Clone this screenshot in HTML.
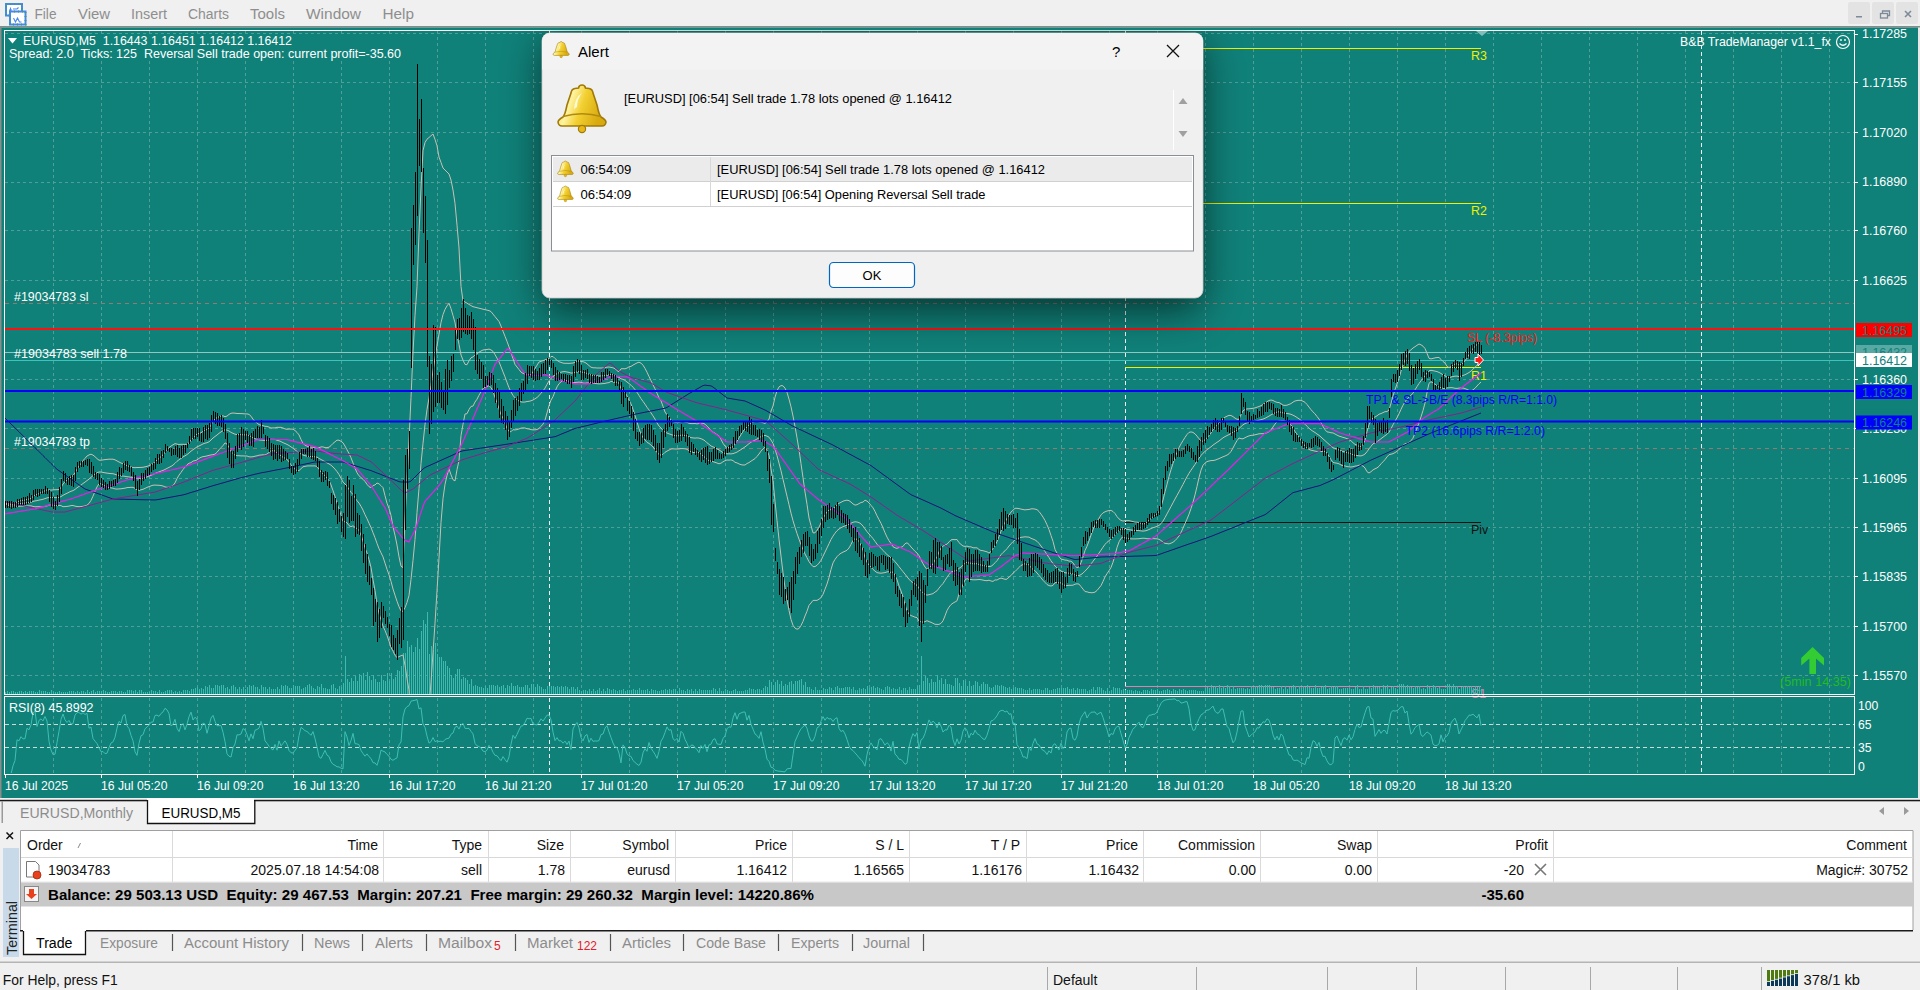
<!DOCTYPE html><html><head><meta charset="utf-8"><style>html,body{margin:0;padding:0;background:#f0f0f0;overflow:hidden}svg{display:block} text{font-family:"Liberation Sans",sans-serif;white-space:pre}</style></head><body><svg width="1920" height="990" viewBox="0 0 1920 990"><rect x="0" y="0" width="1920" height="26" fill="#f0f0f0" /><rect x="0" y="26" width="1920" height="1.5" fill="#8a8a8a" /><g transform="translate(5,3)"><rect x="1" y="1" width="16" height="11.5" fill="#fff" stroke="#4a86f0" stroke-width="2"/><rect x="1" y="1" width="16" height="11.5" fill="none" stroke="#3aa070" stroke-width="2" stroke-dasharray="1,3"/><rect x="5" y="8.5" width="15.5" height="13" fill="#fff" stroke="#4a86f0" stroke-width="2"/><rect x="5" y="8.5" width="15.5" height="13" fill="none" stroke="#3aa070" stroke-width="2" stroke-dasharray="1,3"/><path d="M4 7 h3 M5.5 4.5 v5 M8 6 h4 l1.5 -1.5 M8.5 15 l2 4 l2 -4 l2 4 h2" fill="none" stroke="#4a86f0" stroke-width="1.1"/></g><text x="34.5" y="19" font-size="14" fill="#8e8e8e" font-weight="normal" text-anchor="start" textLength="22.0" lengthAdjust="spacingAndGlyphs" >File</text><text x="78" y="19" font-size="14" fill="#8e8e8e" font-weight="normal" text-anchor="start" textLength="32" lengthAdjust="spacingAndGlyphs" >View</text><text x="131" y="19" font-size="14" fill="#8e8e8e" font-weight="normal" text-anchor="start" textLength="36" lengthAdjust="spacingAndGlyphs" >Insert</text><text x="188" y="19" font-size="14" fill="#8e8e8e" font-weight="normal" text-anchor="start" textLength="41" lengthAdjust="spacingAndGlyphs" >Charts</text><text x="250" y="19" font-size="14" fill="#8e8e8e" font-weight="normal" text-anchor="start" textLength="35" lengthAdjust="spacingAndGlyphs" >Tools</text><text x="306" y="19" font-size="14" fill="#8e8e8e" font-weight="normal" text-anchor="start" textLength="55" lengthAdjust="spacingAndGlyphs" >Window</text><text x="382.5" y="19" font-size="14" fill="#8e8e8e" font-weight="normal" text-anchor="start" textLength="31.5" lengthAdjust="spacingAndGlyphs" >Help</text><rect x="1848" y="2" width="22" height="22" fill="#e3e3e3" rx="2"/><rect x="1872" y="2" width="22" height="22" fill="#e3e3e3" rx="2"/><rect x="1896" y="2" width="22" height="22" fill="#e3e3e3" rx="2"/><rect x="1856" y="16" width="6" height="1.5" fill="#7d8a99"/><g fill="none" stroke="#7d8a99" stroke-width="1.3"><rect x="1880.5" y="13.5" width="7" height="4.5"/><path d="M1882.5 13.5 v-2.5 h7 v4.5 h-2"/></g><path d="M1905 11 l6 6 M1911 11 l-6 6" stroke="#7d8a99" stroke-width="1.6"/><rect x="0" y="27.5" width="1920" height="771" fill="#108179" /><rect x="0" y="27.5" width="1.5" height="771" fill="#8c8c8c" /><rect x="1918" y="27.5" width="2" height="771" fill="#e8e8e8" /><line x1="5" y1="33.5" x2="1854" y2="33.5" stroke="#4f9e97" stroke-dasharray="3,3"/><line x1="5" y1="82.5" x2="1854" y2="82.5" stroke="#4f9e97" stroke-dasharray="3,3"/><line x1="5" y1="132.5" x2="1854" y2="132.5" stroke="#4f9e97" stroke-dasharray="3,3"/><line x1="5" y1="182.5" x2="1854" y2="182.5" stroke="#4f9e97" stroke-dasharray="3,3"/><line x1="5" y1="230.5" x2="1854" y2="230.5" stroke="#4f9e97" stroke-dasharray="3,3"/><line x1="5" y1="280.5" x2="1854" y2="280.5" stroke="#4f9e97" stroke-dasharray="3,3"/><line x1="5" y1="329.5" x2="1854" y2="329.5" stroke="#4f9e97" stroke-dasharray="3,3"/><line x1="5" y1="379.5" x2="1854" y2="379.5" stroke="#4f9e97" stroke-dasharray="3,3"/><line x1="5" y1="428.5" x2="1854" y2="428.5" stroke="#4f9e97" stroke-dasharray="3,3"/><line x1="5" y1="478.5" x2="1854" y2="478.5" stroke="#4f9e97" stroke-dasharray="3,3"/><line x1="5" y1="527.5" x2="1854" y2="527.5" stroke="#4f9e97" stroke-dasharray="3,3"/><line x1="5" y1="576.5" x2="1854" y2="576.5" stroke="#4f9e97" stroke-dasharray="3,3"/><line x1="5" y1="626.5" x2="1854" y2="626.5" stroke="#4f9e97" stroke-dasharray="3,3"/><line x1="5" y1="675.5" x2="1854" y2="675.5" stroke="#4f9e97" stroke-dasharray="3,3"/><line x1="53.5" y1="31" x2="53.5" y2="694" stroke="#4f9e97" stroke-dasharray="3,3"/><line x1="53.5" y1="698" x2="53.5" y2="773" stroke="#4f9e97" stroke-dasharray="3,3"/><line x1="101.5" y1="31" x2="101.5" y2="694" stroke="#4f9e97" stroke-dasharray="3,3"/><line x1="101.5" y1="698" x2="101.5" y2="773" stroke="#4f9e97" stroke-dasharray="3,3"/><line x1="149.5" y1="31" x2="149.5" y2="694" stroke="#4f9e97" stroke-dasharray="3,3"/><line x1="149.5" y1="698" x2="149.5" y2="773" stroke="#4f9e97" stroke-dasharray="3,3"/><line x1="197.5" y1="31" x2="197.5" y2="694" stroke="#4f9e97" stroke-dasharray="3,3"/><line x1="197.5" y1="698" x2="197.5" y2="773" stroke="#4f9e97" stroke-dasharray="3,3"/><line x1="245.5" y1="31" x2="245.5" y2="694" stroke="#4f9e97" stroke-dasharray="3,3"/><line x1="245.5" y1="698" x2="245.5" y2="773" stroke="#4f9e97" stroke-dasharray="3,3"/><line x1="293.5" y1="31" x2="293.5" y2="694" stroke="#4f9e97" stroke-dasharray="3,3"/><line x1="293.5" y1="698" x2="293.5" y2="773" stroke="#4f9e97" stroke-dasharray="3,3"/><line x1="341.5" y1="31" x2="341.5" y2="694" stroke="#4f9e97" stroke-dasharray="3,3"/><line x1="341.5" y1="698" x2="341.5" y2="773" stroke="#4f9e97" stroke-dasharray="3,3"/><line x1="389.5" y1="31" x2="389.5" y2="694" stroke="#4f9e97" stroke-dasharray="3,3"/><line x1="389.5" y1="698" x2="389.5" y2="773" stroke="#4f9e97" stroke-dasharray="3,3"/><line x1="437.5" y1="31" x2="437.5" y2="694" stroke="#4f9e97" stroke-dasharray="3,3"/><line x1="437.5" y1="698" x2="437.5" y2="773" stroke="#4f9e97" stroke-dasharray="3,3"/><line x1="485.5" y1="31" x2="485.5" y2="694" stroke="#4f9e97" stroke-dasharray="3,3"/><line x1="485.5" y1="698" x2="485.5" y2="773" stroke="#4f9e97" stroke-dasharray="3,3"/><line x1="533.5" y1="31" x2="533.5" y2="694" stroke="#4f9e97" stroke-dasharray="3,3"/><line x1="533.5" y1="698" x2="533.5" y2="773" stroke="#4f9e97" stroke-dasharray="3,3"/><line x1="581.5" y1="31" x2="581.5" y2="694" stroke="#4f9e97" stroke-dasharray="3,3"/><line x1="581.5" y1="698" x2="581.5" y2="773" stroke="#4f9e97" stroke-dasharray="3,3"/><line x1="629.5" y1="31" x2="629.5" y2="694" stroke="#4f9e97" stroke-dasharray="3,3"/><line x1="629.5" y1="698" x2="629.5" y2="773" stroke="#4f9e97" stroke-dasharray="3,3"/><line x1="677.5" y1="31" x2="677.5" y2="694" stroke="#4f9e97" stroke-dasharray="3,3"/><line x1="677.5" y1="698" x2="677.5" y2="773" stroke="#4f9e97" stroke-dasharray="3,3"/><line x1="725.5" y1="31" x2="725.5" y2="694" stroke="#4f9e97" stroke-dasharray="3,3"/><line x1="725.5" y1="698" x2="725.5" y2="773" stroke="#4f9e97" stroke-dasharray="3,3"/><line x1="773.5" y1="31" x2="773.5" y2="694" stroke="#4f9e97" stroke-dasharray="3,3"/><line x1="773.5" y1="698" x2="773.5" y2="773" stroke="#4f9e97" stroke-dasharray="3,3"/><line x1="821.5" y1="31" x2="821.5" y2="694" stroke="#4f9e97" stroke-dasharray="3,3"/><line x1="821.5" y1="698" x2="821.5" y2="773" stroke="#4f9e97" stroke-dasharray="3,3"/><line x1="869.5" y1="31" x2="869.5" y2="694" stroke="#4f9e97" stroke-dasharray="3,3"/><line x1="869.5" y1="698" x2="869.5" y2="773" stroke="#4f9e97" stroke-dasharray="3,3"/><line x1="917.5" y1="31" x2="917.5" y2="694" stroke="#4f9e97" stroke-dasharray="3,3"/><line x1="917.5" y1="698" x2="917.5" y2="773" stroke="#4f9e97" stroke-dasharray="3,3"/><line x1="965.5" y1="31" x2="965.5" y2="694" stroke="#4f9e97" stroke-dasharray="3,3"/><line x1="965.5" y1="698" x2="965.5" y2="773" stroke="#4f9e97" stroke-dasharray="3,3"/><line x1="1013.5" y1="31" x2="1013.5" y2="694" stroke="#4f9e97" stroke-dasharray="3,3"/><line x1="1013.5" y1="698" x2="1013.5" y2="773" stroke="#4f9e97" stroke-dasharray="3,3"/><line x1="1061.5" y1="31" x2="1061.5" y2="694" stroke="#4f9e97" stroke-dasharray="3,3"/><line x1="1061.5" y1="698" x2="1061.5" y2="773" stroke="#4f9e97" stroke-dasharray="3,3"/><line x1="1109.5" y1="31" x2="1109.5" y2="694" stroke="#4f9e97" stroke-dasharray="3,3"/><line x1="1109.5" y1="698" x2="1109.5" y2="773" stroke="#4f9e97" stroke-dasharray="3,3"/><line x1="1157.5" y1="31" x2="1157.5" y2="694" stroke="#4f9e97" stroke-dasharray="3,3"/><line x1="1157.5" y1="698" x2="1157.5" y2="773" stroke="#4f9e97" stroke-dasharray="3,3"/><line x1="1205.5" y1="31" x2="1205.5" y2="694" stroke="#4f9e97" stroke-dasharray="3,3"/><line x1="1205.5" y1="698" x2="1205.5" y2="773" stroke="#4f9e97" stroke-dasharray="3,3"/><line x1="1253.5" y1="31" x2="1253.5" y2="694" stroke="#4f9e97" stroke-dasharray="3,3"/><line x1="1253.5" y1="698" x2="1253.5" y2="773" stroke="#4f9e97" stroke-dasharray="3,3"/><line x1="1301.5" y1="31" x2="1301.5" y2="694" stroke="#4f9e97" stroke-dasharray="3,3"/><line x1="1301.5" y1="698" x2="1301.5" y2="773" stroke="#4f9e97" stroke-dasharray="3,3"/><line x1="1349.5" y1="31" x2="1349.5" y2="694" stroke="#4f9e97" stroke-dasharray="3,3"/><line x1="1349.5" y1="698" x2="1349.5" y2="773" stroke="#4f9e97" stroke-dasharray="3,3"/><line x1="1397.5" y1="31" x2="1397.5" y2="694" stroke="#4f9e97" stroke-dasharray="3,3"/><line x1="1397.5" y1="698" x2="1397.5" y2="773" stroke="#4f9e97" stroke-dasharray="3,3"/><line x1="1445.5" y1="31" x2="1445.5" y2="694" stroke="#4f9e97" stroke-dasharray="3,3"/><line x1="1445.5" y1="698" x2="1445.5" y2="773" stroke="#4f9e97" stroke-dasharray="3,3"/><line x1="1493.5" y1="31" x2="1493.5" y2="694" stroke="#4f9e97" stroke-dasharray="3,3"/><line x1="1493.5" y1="698" x2="1493.5" y2="773" stroke="#4f9e97" stroke-dasharray="3,3"/><line x1="1541.5" y1="31" x2="1541.5" y2="694" stroke="#4f9e97" stroke-dasharray="3,3"/><line x1="1541.5" y1="698" x2="1541.5" y2="773" stroke="#4f9e97" stroke-dasharray="3,3"/><line x1="1589.5" y1="31" x2="1589.5" y2="694" stroke="#4f9e97" stroke-dasharray="3,3"/><line x1="1589.5" y1="698" x2="1589.5" y2="773" stroke="#4f9e97" stroke-dasharray="3,3"/><line x1="1637.5" y1="31" x2="1637.5" y2="694" stroke="#4f9e97" stroke-dasharray="3,3"/><line x1="1637.5" y1="698" x2="1637.5" y2="773" stroke="#4f9e97" stroke-dasharray="3,3"/><line x1="1685.5" y1="31" x2="1685.5" y2="694" stroke="#4f9e97" stroke-dasharray="3,3"/><line x1="1685.5" y1="698" x2="1685.5" y2="773" stroke="#4f9e97" stroke-dasharray="3,3"/><line x1="1733.5" y1="31" x2="1733.5" y2="694" stroke="#4f9e97" stroke-dasharray="3,3"/><line x1="1733.5" y1="698" x2="1733.5" y2="773" stroke="#4f9e97" stroke-dasharray="3,3"/><line x1="1781.5" y1="31" x2="1781.5" y2="694" stroke="#4f9e97" stroke-dasharray="3,3"/><line x1="1781.5" y1="698" x2="1781.5" y2="773" stroke="#4f9e97" stroke-dasharray="3,3"/><line x1="1829.5" y1="31" x2="1829.5" y2="694" stroke="#4f9e97" stroke-dasharray="3,3"/><line x1="1829.5" y1="698" x2="1829.5" y2="773" stroke="#4f9e97" stroke-dasharray="3,3"/><line x1="549.5" y1="31" x2="549.5" y2="694" stroke="#f0f0f0" stroke-dasharray="4,3"/><line x1="549.5" y1="698" x2="549.5" y2="773" stroke="#f0f0f0" stroke-dasharray="4,3"/><line x1="1125.5" y1="31" x2="1125.5" y2="694" stroke="#f0f0f0" stroke-dasharray="4,3"/><line x1="1125.5" y1="698" x2="1125.5" y2="773" stroke="#f0f0f0" stroke-dasharray="4,3"/><line x1="1701.5" y1="31" x2="1701.5" y2="694" stroke="#f0f0f0" stroke-dasharray="4,3"/><line x1="1701.5" y1="698" x2="1701.5" y2="773" stroke="#f0f0f0" stroke-dasharray="4,3"/><line x1="5" y1="724.5" x2="1854" y2="724.5" stroke="#c8dcd8" stroke-dasharray="4,3"/><line x1="5" y1="747.5" x2="1854" y2="747.5" stroke="#c8dcd8" stroke-dasharray="4,3"/><line x1="5" y1="303.5" x2="1854" y2="303.5" stroke="#95796f" stroke-dasharray="4,4"/><line x1="5" y1="448.5" x2="1854" y2="448.5" stroke="#95796f" stroke-dasharray="4,4"/><line x1="5" y1="352.5" x2="1854" y2="352.5" stroke="#8ec8c4" stroke-width="1"/><line x1="5" y1="360.5" x2="1854" y2="360.5" stroke="#3cc4bc" stroke-width="1"/><line x1="1125" y1="48.5" x2="1481" y2="48.5" stroke="#f0f000"/><line x1="1125" y1="203.5" x2="1481" y2="203.5" stroke="#f0f000"/><line x1="1125" y1="367.5" x2="1481" y2="367.5" stroke="#f0f000"/><line x1="1125" y1="522.5" x2="1481" y2="522.5" stroke="#111"/><line x1="1125" y1="686.5" x2="1481" y2="686.5" stroke="#e080b0"/><text x="1471" y="60" font-size="12.4" fill="#f0f000">R3</text><text x="1471" y="215" font-size="12.4" fill="#f0f000">R2</text><text x="1471" y="380" font-size="12.4" fill="#f0f000">R1</text><text x="1471" y="534" font-size="12.4" fill="#111">Piv</text><text x="1471" y="697.5" font-size="12.4" fill="#e080b0">S1</text><text x="14" y="301" font-size="12.4" fill="#fff">#19034783 sl</text><text x="14" y="358" font-size="12.4" fill="#fff" textLength="113" lengthAdjust="spacingAndGlyphs">#19034783 sell 1.78</text><text x="14" y="446" font-size="12.4" fill="#fff">#19034783 tp</text><defs><clipPath id="cm"><rect x="5" y="31" width="1849" height="663"/></clipPath><clipPath id="cr"><rect x="5" y="697" width="1849" height="76"/></clipPath></defs><g clip-path="url(#cm)"><path d="M5.5 694V691.7 M7.5 694V690.6 M9.5 694V691.8 M11.5 694V690.8 M13.5 694V691.4 M15.5 694V692.1 M17.5 694V692.3 M19.5 694V691.2 M21.5 694V690.7 M23.5 694V692.2 M25.5 694V691.0 M27.5 694V691.8 M29.5 694V691.0 M31.5 694V690.7 M33.5 694V690.9 M35.5 694V691.8 M37.5 694V692.0 M39.5 694V690.4 M41.5 694V690.5 M43.5 694V690.5 M45.5 694V691.2 M47.5 694V692.1 M49.5 694V691.5 M51.5 694V690.4 M53.5 694V692.1 M55.5 694V691.6 M57.5 694V692.1 M59.5 694V690.5 M61.5 694V691.5 M63.5 694V692.0 M65.5 694V691.5 M67.5 694V691.8 M69.5 694V691.3 M71.5 694V690.9 M73.5 694V690.8 M75.5 694V691.9 M77.5 694V691.0 M79.5 694V692.0 M81.5 694V691.2 M83.5 694V690.5 M85.5 694V691.6 M87.5 694V690.4 M89.5 694V691.6 M91.5 694V691.3 M93.5 694V690.4 M95.5 694V692.1 M97.5 694V690.9 M99.5 694V690.9 M101.5 694V690.6 M103.5 694V690.1 M105.5 694V690.6 M107.5 694V691.6 M109.5 694V691.6 M111.5 694V691.0 M113.5 694V691.4 M115.5 694V690.8 M117.5 694V691.8 M119.5 694V690.5 M121.5 694V691.1 M123.5 694V691.9 M125.5 694V691.7 M127.5 694V689.9 M129.5 694V690.1 M131.5 694V690.0 M133.5 694V691.1 M135.5 694V689.8 M137.5 694V691.6 M139.5 694V690.3 M141.5 694V689.8 M143.5 694V691.5 M145.5 694V691.9 M147.5 694V691.6 M149.5 694V691.7 M151.5 694V690.1 M153.5 694V690.5 M155.5 694V690.8 M157.5 694V691.6 M159.5 694V690.4 M161.5 694V691.6 M163.5 694V691.6 M165.5 694V690.5 M167.5 694V690.4 M169.5 694V690.0 M171.5 694V689.9 M173.5 694V691.5 M175.5 694V691.1 M177.5 694V691.5 M179.5 694V690.7 M181.5 694V691.8 M183.5 694V689.8 M185.5 694V690.2 M187.5 694V689.9 M189.5 694V690.6 M191.5 694V689.2 M193.5 694V688.5 M195.5 694V687.7 M197.5 694V687.0 M199.5 694V688.8 M201.5 694V687.9 M203.5 694V689.3 M205.5 694V685.9 M207.5 694V687.3 M209.5 694V684.8 M211.5 694V688.2 M213.5 694V687.5 M215.5 694V685.3 M217.5 694V684.8 M219.5 694V685.8 M221.5 694V685.2 M223.5 694V685.0 M225.5 694V688.2 M227.5 694V686.5 M229.5 694V689.2 M231.5 694V686.1 M233.5 694V684.8 M235.5 694V687.0 M237.5 694V688.7 M239.5 694V686.6 M241.5 694V689.1 M243.5 694V687.1 M245.5 694V689.0 M247.5 694V687.3 M249.5 694V685.3 M251.5 694V685.7 M253.5 694V685.1 M255.5 694V687.1 M257.5 694V687.2 M259.5 694V689.1 M261.5 694V685.4 M263.5 694V686.5 M265.5 694V687.3 M267.5 694V688.6 M269.5 694V687.0 M271.5 694V689.0 M273.5 694V688.7 M275.5 694V688.9 M277.5 694V687.1 M279.5 694V688.6 M281.5 694V685.0 M283.5 694V686.1 M285.5 694V684.8 M287.5 694V686.4 M289.5 694V688.4 M291.5 694V687.8 M293.5 694V684.9 M295.5 694V686.2 M297.5 694V685.8 M299.5 694V685.9 M301.5 694V689.0 M303.5 694V688.1 M305.5 694V686.9 M307.5 694V684.7 M309.5 694V684.2 M311.5 694V686.0 M313.5 694V687.8 M315.5 694V688.9 M317.5 694V686.2 M319.5 694V687.0 M321.5 694V684.2 M323.5 694V688.0 M325.5 694V688.0 M327.5 694V689.0 M329.5 694V688.9 M331.5 694V684.8 M333.5 694V684.4 M335.5 694V688.2 M337.5 694V689.0 M339.5 694V685.9 M341.5 694V687.1 M343.5 694V683.3 M345.5 694V656.0 M347.5 694V678.7 M349.5 694V681.7 M351.5 694V677.5 M353.5 694V680.8 M355.5 694V675.5 M357.5 694V680.9 M359.5 694V673.9 M361.5 694V675.9 M363.5 694V673.3 M365.5 694V679.5 M367.5 694V672.3 M369.5 694V676.4 M371.5 694V680.1 M373.5 694V675.4 M375.5 694V679.3 M377.5 694V681.5 M379.5 694V682.3 M381.5 694V675.2 M383.5 694V679.7 M385.5 694V681.3 M387.5 694V672.7 M389.5 694V680.6 M391.5 694V672.7 M393.5 694V678.7 M395.5 694V677.4 M397.5 694V669.9 M399.5 694V671.0 M401.5 694V666.0 M403.5 694V653.3 M405.5 694V653.0 M407.5 694V640.7 M409.5 694V646.9 M411.5 694V645.4 M413.5 694V651.6 M415.5 694V647.3 M417.5 694V638.4 M419.5 694V648.9 M421.5 694V631.4 M423.5 694V620.0 M425.5 694V623.7 M427.5 694V612.0 M429.5 694V653.9 M431.5 694V645.9 M433.5 694V650.1 M435.5 694V642.6 M437.5 694V653.7 M439.5 694V656.9 M441.5 694V657.1 M443.5 694V660.8 M445.5 694V660.6 M447.5 694V665.6 M449.5 694V668.1 M451.5 694V675.1 M453.5 694V677.7 M455.5 694V673.9 M457.5 694V668.6 M459.5 694V669.2 M461.5 694V678.9 M463.5 694V676.5 M465.5 694V678.3 M467.5 694V680.1 M469.5 694V683.7 M471.5 694V679.2 M473.5 694V685.9 M475.5 694V685.4 M477.5 694V685.8 M479.5 694V686.9 M481.5 694V687.4 M483.5 694V688.1 M485.5 694V685.5 M487.5 694V687.6 M489.5 694V684.8 M491.5 694V685.1 M493.5 694V685.0 M495.5 694V685.9 M497.5 694V685.2 M499.5 694V687.0 M501.5 694V686.1 M503.5 694V684.9 M505.5 694V687.6 M507.5 694V684.7 M509.5 694V685.6 M511.5 694V683.4 M513.5 694V685.5 M515.5 694V685.9 M517.5 694V684.7 M519.5 694V687.4 M521.5 694V687.0 M523.5 694V686.7 M525.5 694V685.1 M527.5 694V685.2 M529.5 694V688.1 M531.5 694V684.0 M533.5 694V683.9 M535.5 694V686.6 M537.5 694V684.0 M539.5 694V686.0 M541.5 694V687.3 M543.5 694V688.8 M545.5 694V689.2 M547.5 694V686.3 M549.5 694V685.7 M551.5 694V686.3 M553.5 694V685.5 M555.5 694V687.2 M557.5 694V685.8 M559.5 694V686.5 M561.5 694V686.4 M563.5 694V686.8 M565.5 694V686.3 M567.5 694V686.9 M569.5 694V689.2 M571.5 694V686.6 M573.5 694V687.1 M575.5 694V688.8 M577.5 694V687.3 M579.5 694V689.6 M581.5 694V690.8 M583.5 694V689.7 M585.5 694V690.2 M587.5 694V690.8 M589.5 694V688.6 M591.5 694V690.7 M593.5 694V689.1 M595.5 694V690.7 M597.5 694V689.7 M599.5 694V688.3 M601.5 694V691.0 M603.5 694V688.7 M605.5 694V691.2 M607.5 694V688.3 M609.5 694V688.5 M611.5 694V689.9 M613.5 694V689.3 M615.5 694V689.9 M617.5 694V690.8 M619.5 694V690.2 M621.5 694V689.9 M623.5 694V688.6 M625.5 694V690.9 M627.5 694V689.6 M629.5 694V689.8 M631.5 694V689.6 M633.5 694V688.9 M635.5 694V689.5 M637.5 694V690.3 M639.5 694V688.4 M641.5 694V689.5 M643.5 694V690.4 M645.5 694V689.6 M647.5 694V688.6 M649.5 694V691.1 M651.5 694V689.3 M653.5 694V689.8 M655.5 694V690.4 M657.5 694V690.8 M659.5 694V690.6 M661.5 694V689.9 M663.5 694V690.0 M665.5 694V689.4 M667.5 694V690.4 M669.5 694V689.4 M671.5 694V689.8 M673.5 694V688.9 M675.5 694V688.8 M677.5 694V690.5 M679.5 694V688.3 M681.5 694V689.6 M683.5 694V690.2 M685.5 694V690.5 M687.5 694V689.1 M689.5 694V689.9 M691.5 694V689.2 M693.5 694V690.5 M695.5 694V688.7 M697.5 694V690.5 M699.5 694V688.6 M701.5 694V689.9 M703.5 694V690.0 M705.5 694V689.5 M707.5 694V689.7 M709.5 694V689.6 M711.5 694V689.6 M713.5 694V688.4 M715.5 694V689.0 M717.5 694V691.0 M719.5 694V688.3 M721.5 694V691.2 M723.5 694V691.1 M725.5 694V688.8 M727.5 694V690.4 M729.5 694V691.2 M731.5 694V690.7 M733.5 694V689.8 M735.5 694V688.7 M737.5 694V691.2 M739.5 694V690.8 M741.5 694V691.2 M743.5 694V691.1 M745.5 694V690.3 M747.5 694V689.8 M749.5 694V688.3 M751.5 694V689.3 M753.5 694V688.7 M755.5 694V689.5 M757.5 694V688.5 M759.5 694V689.2 M761.5 694V689.9 M763.5 694V688.0 M765.5 694V686.0 M767.5 694V687.0 M769.5 694V679.5 M771.5 694V682.2 M773.5 694V684.6 M775.5 694V682.2 M777.5 694V679.5 M779.5 694V684.0 M781.5 694V681.4 M783.5 694V685.5 M785.5 694V684.3 M787.5 694V684.7 M789.5 694V682.1 M791.5 694V680.5 M793.5 694V684.4 M795.5 694V680.5 M797.5 694V681.4 M799.5 694V680.0 M801.5 694V678.7 M803.5 694V685.1 M805.5 694V681.9 M807.5 694V686.5 M809.5 694V687.4 M811.5 694V689.4 M813.5 694V689.8 M815.5 694V687.4 M817.5 694V689.7 M819.5 694V690.0 M821.5 694V689.8 M823.5 694V687.9 M825.5 694V689.3 M827.5 694V689.0 M829.5 694V686.9 M831.5 694V688.3 M833.5 694V689.5 M835.5 694V687.3 M837.5 694V686.0 M839.5 694V687.5 M841.5 694V688.3 M843.5 694V687.9 M845.5 694V687.2 M847.5 694V686.6 M849.5 694V686.9 M851.5 694V689.1 M853.5 694V686.9 M855.5 694V689.7 M857.5 694V689.6 M859.5 694V688.0 M861.5 694V689.4 M863.5 694V687.8 M865.5 694V689.0 M867.5 694V686.2 M869.5 694V688.3 M871.5 694V686.7 M873.5 694V686.2 M875.5 694V688.2 M877.5 694V686.9 M879.5 694V688.1 M881.5 694V688.5 M883.5 694V689.6 M885.5 694V687.4 M887.5 694V686.3 M889.5 694V687.3 M891.5 694V688.8 M893.5 694V687.9 M895.5 694V688.7 M897.5 694V688.5 M899.5 694V686.9 M901.5 694V690.1 M903.5 694V688.1 M905.5 694V688.0 M907.5 694V689.5 M909.5 694V687.1 M911.5 694V689.1 M913.5 694V688.5 M915.5 694V689.1 M917.5 694V685.6 M919.5 694V684.8 M921.5 694V656.0 M923.5 694V681.3 M925.5 694V675.6 M927.5 694V678.3 M929.5 694V683.2 M931.5 694V679.4 M933.5 694V682.0 M935.5 694V681.7 M937.5 694V675.4 M939.5 694V680.3 M941.5 694V677.9 M943.5 694V683.7 M945.5 694V679.4 M947.5 694V684.4 M949.5 694V683.6 M951.5 694V684.6 M953.5 694V685.6 M955.5 694V678.1 M957.5 694V677.8 M959.5 694V683.1 M961.5 694V686.2 M963.5 694V680.4 M965.5 694V681.2 M967.5 694V686.3 M969.5 694V680.8 M971.5 694V686.4 M973.5 694V685.2 M975.5 694V681.3 M977.5 694V681.6 M979.5 694V685.6 M981.5 694V683.8 M983.5 694V681.9 M985.5 694V683.5 M987.5 694V684.2 M989.5 694V686.7 M991.5 694V687.6 M993.5 694V686.9 M995.5 694V684.9 M997.5 694V684.7 M999.5 694V685.7 M1001.5 694V685.1 M1003.5 694V686.2 M1005.5 694V686.5 M1007.5 694V688.3 M1009.5 694V687.2 M1011.5 694V688.8 M1013.5 694V687.5 M1015.5 694V687.2 M1017.5 694V687.7 M1019.5 694V687.9 M1021.5 694V688.2 M1023.5 694V688.7 M1025.5 694V689.8 M1027.5 694V690.3 M1029.5 694V688.3 M1031.5 694V689.8 M1033.5 694V688.5 M1035.5 694V688.7 M1037.5 694V688.5 M1039.5 694V689.2 M1041.5 694V689.8 M1043.5 694V689.6 M1045.5 694V688.2 M1047.5 694V687.5 M1049.5 694V689.6 M1051.5 694V689.6 M1053.5 694V689.1 M1055.5 694V689.2 M1057.5 694V688.4 M1059.5 694V688.0 M1061.5 694V687.9 M1063.5 694V687.8 M1065.5 694V688.1 M1067.5 694V687.2 M1069.5 694V689.1 M1071.5 694V689.1 M1073.5 694V688.4 M1075.5 694V689.6 M1077.5 694V687.7 M1079.5 694V689.2 M1081.5 694V688.7 M1083.5 694V688.8 M1085.5 694V689.4 M1087.5 694V690.7 M1089.5 694V689.7 M1091.5 694V689.0 M1093.5 694V687.3 M1095.5 694V690.2 M1097.5 694V687.4 M1099.5 694V687.2 M1101.5 694V687.9 M1103.5 694V689.7 M1105.5 694V690.6 M1107.5 694V687.5 M1109.5 694V690.5 M1111.5 694V689.6 M1113.5 694V687.3 M1115.5 694V688.3 M1117.5 694V687.7 M1119.5 694V687.7 M1121.5 694V690.1 M1123.5 694V688.9 M1125.5 694V690.4 M1127.5 694V690.0 M1129.5 694V690.3 M1131.5 694V689.8 M1133.5 694V691.1 M1135.5 694V690.1 M1137.5 694V691.4 M1139.5 694V691.1 M1141.5 694V691.6 M1143.5 694V690.2 M1145.5 694V690.2 M1147.5 694V689.9 M1149.5 694V690.6 M1151.5 694V689.2 M1153.5 694V689.7 M1155.5 694V690.1 M1157.5 694V689.3 M1159.5 694V691.1 M1161.5 694V690.8 M1163.5 694V690.1 M1165.5 694V689.9 M1167.5 694V688.9 M1169.5 694V689.6 M1171.5 694V691.3 M1173.5 694V688.8 M1175.5 694V690.1 M1177.5 694V690.9 M1179.5 694V689.3 M1181.5 694V689.6 M1183.5 694V688.9 M1185.5 694V689.8 M1187.5 694V690.6 M1189.5 694V690.0 M1191.5 694V690.0 M1193.5 694V690.3 M1195.5 694V689.6 M1197.5 694V690.8 M1199.5 694V690.5 M1201.5 694V690.7 M1203.5 694V690.7 M1205.5 694V688.4 M1207.5 694V687.0 M1209.5 694V687.9 M1211.5 694V685.3 M1213.5 694V686.7 M1215.5 694V686.4 M1217.5 694V688.2 M1219.5 694V685.2 M1221.5 694V687.9 M1223.5 694V685.5 M1225.5 694V688.4 M1227.5 694V685.0 M1229.5 694V686.3 M1231.5 694V688.7 M1233.5 694V686.0 M1235.5 694V688.8 M1237.5 694V687.7 M1239.5 694V687.7 M1241.5 694V687.9 M1243.5 694V687.8 M1245.5 694V688.7 M1247.5 694V687.6 M1249.5 694V689.1 M1251.5 694V685.6 M1253.5 694V687.8 M1255.5 694V686.0 M1257.5 694V687.4 M1259.5 694V684.7 M1261.5 694V685.2 M1263.5 694V686.0 M1265.5 694V685.3 M1267.5 694V685.0 M1269.5 694V684.9 M1271.5 694V687.4 M1273.5 694V686.5 M1275.5 694V689.1 M1277.5 694V687.7 M1279.5 694V687.8 M1281.5 694V686.4 M1283.5 694V689.4 M1285.5 694V685.7 M1287.5 694V689.1 M1289.5 694V687.3 M1291.5 694V687.0 M1293.5 694V685.2 M1295.5 694V686.3 M1297.5 694V688.7 M1299.5 694V686.1 M1301.5 694V688.2 M1303.5 694V686.3 M1305.5 694V687.3 M1307.5 694V684.6 M1309.5 694V687.1 M1311.5 694V688.0 M1313.5 694V687.8 M1315.5 694V684.6 M1317.5 694V687.6 M1319.5 694V688.2 M1321.5 694V686.7 M1323.5 694V686.0 M1325.5 694V684.6 M1327.5 694V689.0 M1329.5 694V687.7 M1331.5 694V685.7 M1333.5 694V686.8 M1335.5 694V685.8 M1337.5 694V685.9 M1339.5 694V688.9 M1341.5 694V689.1 M1343.5 694V688.4 M1345.5 694V687.8 M1347.5 694V688.4 M1349.5 694V687.9 M1351.5 694V688.7 M1353.5 694V689.2 M1355.5 694V686.6 M1357.5 694V685.4 M1359.5 694V688.5 M1361.5 694V688.8 M1363.5 694V685.5 M1365.5 694V688.9 M1367.5 694V688.6 M1369.5 694V686.7 M1371.5 694V687.7 M1373.5 694V685.2 M1375.5 694V686.6 M1377.5 694V686.6 M1379.5 694V687.3 M1381.5 694V689.1 M1383.5 694V685.0 M1385.5 694V687.2 M1387.5 694V684.9 M1389.5 694V688.7 M1391.5 694V687.0 M1393.5 694V686.4 M1395.5 694V688.4 M1397.5 694V688.8 M1399.5 694V684.3 M1401.5 694V684.3 M1403.5 694V684.0 M1405.5 694V686.4 M1407.5 694V685.4 M1409.5 694V686.0 M1411.5 694V686.7 M1413.5 694V688.3 M1415.5 694V685.8 M1417.5 694V686.8 M1419.5 694V685.6 M1421.5 694V688.9 M1423.5 694V687.6 M1425.5 694V688.6 M1427.5 694V685.1 M1429.5 694V686.6 M1431.5 694V687.6 M1433.5 694V685.0 M1435.5 694V686.4 M1437.5 694V687.6 M1439.5 694V687.1 M1441.5 694V689.1 M1443.5 694V688.8 M1445.5 694V688.9 M1447.5 694V684.0 M1449.5 694V684.4 M1451.5 694V686.2 M1453.5 694V684.1 M1455.5 694V686.2 M1457.5 694V685.5 M1459.5 694V688.5 M1461.5 694V686.8 M1463.5 694V685.8 M1465.5 694V686.9 M1467.5 694V685.6 M1469.5 694V687.2 M1471.5 694V685.5 M1473.5 694V687.9 M1475.5 694V686.4 M1477.5 694V686.7 M1479.5 694V686.2 M1481.5 694V688.8" stroke="#3fb9ad" stroke-width="1" shape-rendering="crispEdges"/><polyline points="5.0,503.3 7.0,503.0 9.0,503.0 11.0,503.3 13.0,503.4 15.0,503.4 17.0,501.9 19.0,501.3 21.0,500.6 23.0,500.3 25.0,500.1 27.0,499.4 29.0,499.0 31.0,498.4 33.0,496.6 35.0,495.0 37.0,494.5 39.0,493.6 41.0,492.6 43.0,491.9 45.0,490.7 47.0,489.9 49.0,489.9 51.0,490.1 53.0,489.9 55.0,489.7 57.0,489.7 59.0,489.5 61.0,487.7 63.0,484.0 65.0,481.8 67.0,480.2 69.0,478.3 71.0,477.0 73.0,475.8 75.0,472.8 77.0,469.2 79.0,466.0 81.0,463.4 83.0,460.7 85.0,458.3 87.0,456.0 89.0,454.9 91.0,454.2 93.0,455.1 95.0,456.7 97.0,458.6 99.0,460.2 101.0,460.2 103.0,459.9 105.0,459.6 107.0,459.4 109.0,459.2 111.0,459.2 113.0,459.2 115.0,459.8 117.0,460.9 119.0,462.0 121.0,463.0 123.0,463.8 125.0,464.3 127.0,465.8 129.0,466.3 131.0,467.2 133.0,467.5 135.0,467.7 137.0,467.5 139.0,467.5 141.0,467.4 143.0,467.3 145.0,466.8 147.0,466.4 149.0,465.7 151.0,464.7 153.0,463.8 155.0,461.8 157.0,460.0 159.0,458.5 161.0,456.6 163.0,454.9 165.0,452.2 167.0,449.6 169.0,447.5 171.0,446.1 173.0,444.8 175.0,443.6 177.0,444.1 179.0,444.5 181.0,444.3 183.0,444.3 185.0,444.4 187.0,444.3 189.0,442.9 191.0,439.8 193.0,438.3 195.0,435.8 197.0,434.0 199.0,433.5 201.0,432.8 203.0,431.3 205.0,430.0 207.0,429.5 209.0,428.2 211.0,425.1 213.0,421.4 215.0,419.0 217.0,417.6 219.0,416.8 221.0,416.0 223.0,415.8 225.0,416.7 227.0,416.1 229.0,414.4 231.0,413.3 233.0,413.0 235.0,413.2 237.0,413.5 239.0,413.5 241.0,413.6 243.0,413.7 245.0,413.9 247.0,413.9 249.0,414.4 251.0,416.2 253.0,419.2 255.0,421.4 257.0,423.0 259.0,424.6 261.0,425.2 263.0,425.7 265.0,426.3 267.0,426.4 269.0,427.1 271.0,428.0 273.0,427.9 275.0,427.9 277.0,427.3 279.0,427.4 281.0,427.3 283.0,428.0 285.0,428.9 287.0,429.3 289.0,429.0 291.0,429.1 293.0,429.2 295.0,430.5 297.0,432.4 299.0,434.9 301.0,439.4 303.0,443.4 305.0,445.1 307.0,446.2 309.0,446.9 311.0,447.2 313.0,447.2 315.0,447.8 317.0,447.9 319.0,447.7 321.0,446.9 323.0,446.9 325.0,447.6 327.0,447.7 329.0,447.2 331.0,445.6 333.0,443.4 335.0,441.8 337.0,440.2 339.0,440.2 341.0,441.3 343.0,442.8 345.0,446.1 347.0,449.8 349.0,453.5 351.0,457.8 353.0,463.0 355.0,468.1 357.0,472.8 359.0,475.8 361.0,477.5 363.0,479.3 365.0,481.5 367.0,484.3 369.0,486.7 371.0,487.6 373.0,485.5 375.0,485.0 377.0,483.0 379.0,483.8 381.0,485.7 383.0,487.7 385.0,495.7 387.0,503.2 389.0,508.4 391.0,515.4 393.0,526.9 395.0,535.2 397.0,545.0 399.0,556.8 401.0,566.2 403.0,567.6 405.0,520.0 407.0,480.0 409.0,440.0 411.0,397.5 413.0,352.5 415.0,315.5 417.0,286.6 419.0,233.0 421.0,188.0 423.0,150.5 425.0,142.5 427.0,139.2 429.0,137.5 431.0,135.7 433.0,134.0 435.0,139.4 437.0,145.7 439.0,157.0 441.0,162.5 443.0,168.0 445.0,170.0 447.0,172.0 449.0,174.0 451.0,180.0 453.0,190.0 455.0,203.4 457.0,225.1 459.0,248.0 461.0,286.5 463.0,300.8 465.0,302.0 467.0,303.2 469.0,304.4 471.0,305.6 473.0,306.7 475.0,307.2 477.0,307.7 479.0,308.2 481.0,308.7 483.0,309.2 485.0,309.7 487.0,310.1 489.0,310.6 491.0,311.6 493.0,314.1 495.0,316.6 497.0,319.0 499.0,321.5 501.0,326.1 503.0,331.2 505.0,336.3 507.0,341.4 509.0,346.9 511.0,352.7 513.0,358.6 515.0,364.4 517.0,367.0 519.0,369.5 521.0,372.1 523.0,373.4 525.0,373.9 527.0,374.5 529.0,375.1 531.0,374.9 533.0,371.6 535.0,368.4 537.0,365.2 539.0,362.0 541.0,361.3 543.0,360.6 545.0,359.9 547.0,359.2 549.0,358.5 551.0,356.5 553.0,356.5 555.0,358.5 557.0,360.3 559.0,361.7 561.0,362.4 563.0,363.1 565.0,363.3 567.0,363.3 569.0,363.4 571.0,363.2 573.0,363.0 575.0,362.4 577.0,361.4 579.0,361.1 581.0,361.4 583.0,361.7 585.0,362.4 587.0,363.8 589.0,365.6 591.0,367.2 593.0,367.8 595.0,367.8 597.0,368.0 599.0,368.0 601.0,368.0 603.0,367.9 605.0,367.6 607.0,367.2 609.0,367.0 611.0,367.4 613.0,367.8 615.0,368.7 617.0,370.7 619.0,371.7 621.0,368.8 623.0,368.7 625.0,368.8 627.0,368.1 629.0,366.8 631.0,366.4 633.0,365.1 635.0,364.0 637.0,362.9 639.0,362.2 641.0,363.1 643.0,365.2 645.0,368.4 647.0,372.2 649.0,376.5 651.0,380.7 653.0,384.8 655.0,388.9 657.0,393.1 659.0,397.9 661.0,400.8 663.0,406.4 665.0,412.0 667.0,414.8 669.0,417.5 671.0,420.1 673.0,421.6 675.0,422.5 677.0,422.5 679.0,422.5 681.0,421.8 683.0,421.6 685.0,422.1 687.0,422.4 689.0,423.3 691.0,423.6 693.0,423.6 695.0,423.5 697.0,423.9 699.0,423.5 701.0,423.3 703.0,423.2 705.0,424.1 707.0,426.1 709.0,428.1 711.0,430.9 713.0,432.1 715.0,433.2 717.0,434.7 719.0,435.8 721.0,439.4 723.0,443.3 725.0,446.1 727.0,447.6 729.0,447.5 731.0,447.9 733.0,446.7 735.0,443.5 737.0,441.4 739.0,437.8 741.0,434.6 743.0,431.5 745.0,428.8 747.0,427.1 749.0,424.7 751.0,423.3 753.0,422.2 755.0,421.6 757.0,421.5 759.0,421.8 761.0,422.1 763.0,422.8 765.0,423.5 767.0,421.6 769.0,419.1 771.0,411.1 773.0,406.0 775.0,397.3 777.0,390.8 779.0,386.9 781.0,385.6 783.0,385.8 785.0,388.2 787.0,392.4 789.0,399.1 791.0,406.8 793.0,416.1 795.0,426.5 797.0,437.8 799.0,449.8 801.0,463.7 803.0,477.7 805.0,492.0 807.0,504.3 809.0,518.0 811.0,525.5 813.0,532.8 815.0,532.8 817.0,530.2 819.0,527.1 821.0,522.9 823.0,518.0 825.0,515.1 827.0,511.8 829.0,510.0 831.0,509.6 833.0,509.2 835.0,507.0 837.0,504.7 839.0,503.3 841.0,502.3 843.0,501.2 845.0,500.5 847.0,500.2 849.0,500.6 851.0,502.1 853.0,503.9 855.0,505.1 857.0,504.7 859.0,503.6 861.0,502.5 863.0,502.1 865.0,500.2 867.0,501.1 869.0,502.9 871.0,505.4 873.0,507.8 875.0,511.4 877.0,515.8 879.0,519.6 881.0,523.3 883.0,527.9 885.0,532.7 887.0,537.1 889.0,540.7 891.0,543.5 893.0,546.7 895.0,547.8 897.0,548.4 899.0,547.5 901.0,547.3 903.0,546.4 905.0,543.7 907.0,542.8 909.0,544.4 911.0,547.0 913.0,549.1 915.0,551.3 917.0,553.0 919.0,555.7 921.0,559.8 923.0,563.7 925.0,567.0 927.0,569.4 929.0,567.7 931.0,566.1 933.0,563.9 935.0,559.9 937.0,557.1 939.0,551.8 941.0,548.1 943.0,546.2 945.0,544.8 947.0,544.2 949.0,541.9 951.0,539.9 953.0,539.5 955.0,539.7 957.0,539.5 959.0,542.7 961.0,544.4 963.0,546.0 965.0,546.4 967.0,546.1 969.0,546.8 971.0,546.8 973.0,547.8 975.0,547.8 977.0,547.8 979.0,549.5 981.0,550.5 983.0,550.7 985.0,551.3 987.0,551.8 989.0,553.0 991.0,551.5 993.0,548.4 995.0,545.5 997.0,541.5 999.0,536.5 1001.0,531.2 1003.0,526.2 1005.0,522.2 1007.0,518.2 1009.0,515.1 1011.0,512.0 1013.0,510.2 1015.0,508.3 1017.0,508.3 1019.0,508.6 1021.0,509.1 1023.0,509.5 1025.0,509.9 1027.0,509.6 1029.0,509.5 1031.0,508.9 1033.0,508.8 1035.0,509.1 1037.0,509.6 1039.0,511.5 1041.0,514.1 1043.0,517.1 1045.0,520.5 1047.0,524.8 1049.0,529.6 1051.0,535.5 1053.0,541.4 1055.0,549.4 1057.0,553.2 1059.0,556.6 1061.0,559.1 1063.0,559.5 1065.0,560.1 1067.0,560.2 1069.0,561.1 1071.0,561.2 1073.0,562.8 1075.0,566.0 1077.0,567.6 1079.0,566.9 1081.0,562.6 1083.0,557.0 1085.0,550.5 1087.0,546.3 1089.0,540.9 1091.0,535.0 1093.0,529.8 1095.0,525.3 1097.0,521.6 1099.0,518.2 1101.0,514.9 1103.0,512.9 1105.0,511.8 1107.0,511.0 1109.0,510.6 1111.0,510.4 1113.0,511.5 1115.0,513.5 1117.0,516.6 1119.0,518.9 1121.0,520.4 1123.0,521.1 1125.0,520.6 1127.0,520.6 1129.0,520.6 1131.0,521.1 1133.0,521.6 1135.0,522.1 1137.0,522.2 1139.0,522.5 1141.0,523.4 1143.0,523.9 1145.0,523.6 1147.0,522.1 1149.0,520.1 1151.0,518.5 1153.0,516.8 1155.0,515.4 1157.0,513.9 1159.0,511.5 1161.0,506.8 1163.0,500.0 1165.0,491.8 1167.0,484.3 1169.0,476.5 1171.0,469.7 1173.0,463.4 1175.0,457.4 1177.0,452.4 1179.0,447.6 1181.0,443.9 1183.0,440.6 1185.0,437.4 1187.0,434.5 1189.0,432.4 1191.0,431.9 1193.0,432.4 1195.0,433.9 1197.0,436.1 1199.0,438.8 1201.0,440.7 1203.0,441.3 1205.0,439.8 1207.0,437.8 1209.0,435.6 1211.0,432.9 1213.0,429.7 1215.0,427.2 1217.0,425.2 1219.0,423.4 1221.0,421.0 1223.0,418.8 1225.0,417.2 1227.0,416.2 1229.0,415.4 1231.0,415.5 1233.0,416.6 1235.0,418.1 1237.0,419.3 1239.0,419.3 1241.0,414.6 1243.0,410.8 1245.0,409.5 1247.0,408.9 1249.0,408.8 1251.0,408.6 1253.0,408.3 1255.0,407.9 1257.0,407.2 1259.0,406.5 1261.0,405.7 1263.0,404.5 1265.0,403.3 1267.0,401.7 1269.0,400.5 1271.0,400.0 1273.0,400.5 1275.0,401.6 1277.0,402.4 1279.0,402.5 1281.0,403.7 1283.0,405.2 1285.0,405.4 1287.0,405.2 1289.0,404.4 1291.0,403.6 1293.0,402.1 1295.0,401.0 1297.0,400.5 1299.0,400.3 1301.0,400.4 1303.0,401.2 1305.0,402.3 1307.0,404.5 1309.0,407.1 1311.0,409.7 1313.0,411.9 1315.0,413.9 1317.0,416.5 1319.0,419.0 1321.0,422.6 1323.0,426.4 1325.0,429.7 1327.0,431.9 1329.0,432.2 1331.0,432.8 1333.0,432.9 1335.0,434.0 1337.0,435.1 1339.0,436.1 1341.0,436.7 1343.0,437.4 1345.0,437.9 1347.0,438.7 1349.0,439.4 1351.0,440.8 1353.0,442.7 1355.0,444.4 1357.0,445.1 1359.0,446.4 1361.0,446.5 1363.0,444.5 1365.0,440.2 1367.0,431.7 1369.0,424.7 1371.0,420.9 1373.0,417.8 1375.0,417.0 1377.0,415.8 1379.0,414.2 1381.0,413.6 1383.0,412.6 1385.0,411.7 1387.0,411.6 1389.0,410.0 1391.0,403.3 1393.0,395.9 1395.0,389.7 1397.0,384.0 1399.0,378.3 1401.0,371.2 1403.0,364.9 1405.0,360.0 1407.0,354.6 1409.0,351.4 1411.0,349.8 1413.0,348.0 1415.0,346.7 1417.0,345.3 1419.0,344.0 1421.0,344.8 1423.0,346.2 1425.0,348.5 1427.0,353.3 1429.0,358.3 1431.0,358.9 1433.0,358.4 1435.0,357.9 1437.0,357.5 1439.0,357.5 1441.0,359.4 1443.0,361.5 1445.0,363.0 1447.0,366.4 1449.0,367.6 1451.0,366.6 1453.0,365.2 1455.0,364.1 1457.0,363.8 1459.0,365.1 1461.0,364.4 1463.0,363.1 1465.0,360.8 1467.0,358.1 1469.0,354.6 1471.0,351.5 1473.0,348.5 1475.0,346.3 1477.0,344.6 1479.0,342.5 1481.0,341.3" fill="none" stroke="#c8c0b4" stroke-width="1" /><polyline points="5.0,503.3 7.0,503.8 9.0,504.4 11.0,504.7 13.0,504.7 15.0,504.6 17.0,504.1 19.0,503.8 21.0,503.4 23.0,503.2 25.0,503.0 27.0,502.6 29.0,502.4 31.0,502.1 33.0,501.5 35.0,500.9 37.0,500.6 39.0,500.1 41.0,499.7 43.0,499.3 45.0,498.6 47.0,497.9 49.0,497.5 51.0,497.4 53.0,497.5 55.0,497.6 57.0,497.7 59.0,497.4 61.0,496.6 63.0,495.3 65.0,494.2 67.0,493.3 69.0,492.2 71.0,491.3 73.0,490.6 75.0,489.4 77.0,487.8 79.0,486.4 81.0,485.0 83.0,483.5 85.0,482.1 87.0,480.6 89.0,479.1 91.0,477.3 93.0,475.6 95.0,474.0 97.0,472.8 99.0,472.0 101.0,472.0 103.0,472.4 105.0,472.8 107.0,473.1 109.0,473.4 111.0,473.6 113.0,473.7 115.0,474.3 117.0,475.0 119.0,475.4 121.0,475.9 123.0,476.1 125.0,476.3 127.0,476.7 129.0,476.9 131.0,477.3 133.0,477.4 135.0,478.0 137.0,478.7 139.0,478.9 141.0,478.6 143.0,478.3 145.0,477.6 147.0,476.9 149.0,476.1 151.0,475.3 153.0,474.5 155.0,473.5 157.0,472.6 159.0,471.9 161.0,471.1 163.0,470.4 165.0,469.5 167.0,468.4 169.0,467.4 171.0,466.4 173.0,465.1 175.0,463.3 177.0,461.3 179.0,459.8 181.0,458.4 183.0,456.9 185.0,455.8 187.0,454.6 189.0,453.0 191.0,451.2 193.0,449.7 195.0,448.3 197.0,446.9 199.0,446.0 201.0,445.0 203.0,443.9 205.0,443.2 207.0,442.7 209.0,441.8 211.0,440.0 213.0,438.0 215.0,436.5 217.0,435.0 219.0,433.3 221.0,431.9 223.0,430.7 225.0,429.8 227.0,430.1 229.0,431.0 231.0,432.4 233.0,433.3 235.0,434.2 237.0,434.6 239.0,434.6 241.0,434.7 243.0,434.8 245.0,434.9 247.0,434.9 249.0,435.6 251.0,436.5 253.0,438.0 255.0,438.8 257.0,439.4 259.0,439.9 261.0,440.1 263.0,440.3 265.0,440.6 267.0,440.2 269.0,439.8 271.0,439.3 273.0,439.4 275.0,439.4 277.0,440.3 279.0,440.8 281.0,441.6 283.0,442.7 285.0,443.5 287.0,444.4 289.0,445.5 291.0,446.9 293.0,448.2 295.0,449.8 297.0,451.4 299.0,452.7 301.0,454.0 303.0,455.1 305.0,455.7 307.0,456.1 309.0,456.4 311.0,456.6 313.0,456.5 315.0,456.9 317.0,457.1 319.0,458.4 321.0,459.5 323.0,460.6 325.0,461.7 327.0,462.9 329.0,463.9 331.0,465.2 333.0,467.0 335.0,469.1 337.0,471.6 339.0,474.5 341.0,478.2 343.0,482.1 345.0,484.0 347.0,486.3 349.0,489.5 351.0,492.3 353.0,494.4 355.0,497.7 357.0,500.7 359.0,503.1 361.0,506.3 363.0,510.1 365.0,514.7 367.0,518.7 369.0,523.2 371.0,527.5 373.0,532.7 375.0,537.7 377.0,543.4 379.0,548.6 381.0,552.8 383.0,556.9 385.0,563.1 387.0,569.3 389.0,574.8 391.0,581.4 393.0,589.0 395.0,595.2 397.0,601.3 399.0,606.7 401.0,610.9 403.0,611.3 405.0,607.7 407.0,602.4 409.0,595.5 411.0,579.4 413.0,560.3 415.0,539.4 417.0,512.5 419.0,488.5 421.0,463.5 423.0,443.4 425.0,424.6 427.0,409.5 429.0,398.2 431.0,385.6 433.0,370.9 435.0,358.5 437.0,345.8 439.0,334.1 441.0,322.5 443.0,314.6 445.0,309.4 447.0,305.9 449.0,303.3 451.0,308.7 453.0,315.5 455.0,322.7 457.0,334.6 459.0,344.4 461.0,355.0 463.0,360.1 465.0,364.4 467.0,364.7 469.0,360.8 471.0,357.8 473.0,356.9 475.0,354.9 477.0,353.7 479.0,352.2 481.0,351.0 483.0,350.0 485.0,349.7 487.0,349.5 489.0,349.1 491.0,349.9 493.0,351.4 495.0,354.6 497.0,358.2 499.0,361.8 501.0,366.8 503.0,371.9 505.0,376.9 507.0,382.4 509.0,387.7 511.0,392.0 513.0,395.4 515.0,397.9 517.0,399.7 519.0,401.1 521.0,401.9 523.0,402.1 525.0,402.0 527.0,401.5 529.0,401.3 531.0,400.8 533.0,400.0 535.0,398.8 537.0,397.5 539.0,395.7 541.0,393.2 543.0,391.0 545.0,388.1 547.0,384.4 549.0,380.9 551.0,378.3 553.0,376.6 555.0,375.0 557.0,373.6 559.0,372.7 561.0,372.2 563.0,371.7 565.0,371.6 567.0,372.0 569.0,372.4 571.0,373.1 573.0,372.9 575.0,372.5 577.0,371.9 579.0,371.6 581.0,371.9 583.0,372.3 585.0,372.8 587.0,373.4 589.0,374.3 591.0,375.0 593.0,375.5 595.0,375.6 597.0,375.9 599.0,376.0 601.0,375.9 603.0,375.8 605.0,375.5 607.0,375.1 609.0,374.8 611.0,374.4 613.0,374.8 615.0,375.6 617.0,376.5 619.0,377.4 621.0,378.8 623.0,379.4 625.0,380.4 627.0,382.0 629.0,383.5 631.0,385.2 633.0,387.2 635.0,389.6 637.0,392.4 639.0,395.4 641.0,398.6 643.0,401.4 645.0,404.2 647.0,407.3 649.0,409.9 651.0,412.9 653.0,415.9 655.0,419.1 657.0,422.9 659.0,426.1 661.0,428.0 663.0,430.3 665.0,432.2 667.0,433.0 669.0,433.8 671.0,434.5 673.0,435.2 675.0,435.7 677.0,435.8 679.0,435.7 681.0,435.2 683.0,435.1 685.0,435.5 687.0,435.9 689.0,437.0 691.0,437.6 693.0,437.9 695.0,438.1 697.0,437.9 699.0,438.1 701.0,438.7 703.0,439.6 705.0,440.8 707.0,442.8 709.0,444.3 711.0,446.0 713.0,446.9 715.0,447.7 717.0,448.9 719.0,449.8 721.0,451.3 723.0,452.6 725.0,453.4 727.0,453.8 729.0,453.8 731.0,453.9 733.0,453.6 735.0,452.9 737.0,452.1 739.0,450.8 741.0,449.6 743.0,448.2 745.0,446.9 747.0,445.3 749.0,443.6 751.0,442.2 753.0,441.1 755.0,440.1 757.0,439.0 759.0,437.9 761.0,436.6 763.0,435.8 765.0,435.4 767.0,436.1 769.0,437.2 771.0,440.0 773.0,443.4 775.0,449.2 777.0,455.6 779.0,463.1 781.0,470.8 783.0,479.3 785.0,487.9 787.0,496.2 789.0,504.7 791.0,513.1 793.0,520.7 795.0,527.3 797.0,533.5 799.0,539.1 801.0,544.6 803.0,549.6 805.0,554.0 807.0,557.7 809.0,561.7 811.0,564.3 813.0,566.6 815.0,566.6 817.0,565.3 819.0,563.1 821.0,560.3 823.0,556.2 825.0,552.1 827.0,547.9 829.0,543.7 831.0,539.5 833.0,536.1 835.0,533.2 837.0,530.7 839.0,529.0 841.0,527.7 843.0,526.7 845.0,525.9 847.0,525.2 849.0,524.3 851.0,523.2 853.0,522.3 855.0,521.8 857.0,522.0 859.0,522.6 861.0,523.9 863.0,526.1 865.0,528.9 867.0,531.7 869.0,534.0 871.0,536.2 873.0,538.6 875.0,541.3 877.0,544.2 879.0,546.3 881.0,548.2 883.0,550.4 885.0,552.6 887.0,554.5 889.0,556.2 891.0,558.0 893.0,559.4 895.0,561.7 897.0,564.0 899.0,566.7 901.0,569.2 903.0,571.7 905.0,574.1 907.0,576.8 909.0,579.2 911.0,581.3 913.0,582.7 915.0,584.2 917.0,585.3 919.0,588.4 921.0,590.8 923.0,592.9 925.0,594.4 927.0,595.1 929.0,594.7 931.0,594.2 933.0,593.6 935.0,592.1 937.0,590.8 939.0,588.1 941.0,585.7 943.0,583.5 945.0,580.4 947.0,577.3 949.0,574.5 951.0,572.2 953.0,571.3 955.0,570.9 957.0,570.2 959.0,568.4 961.0,567.1 963.0,565.2 965.0,563.2 967.0,562.3 969.0,563.1 971.0,563.2 973.0,563.8 975.0,563.8 977.0,563.7 979.0,564.5 981.0,565.1 983.0,565.4 985.0,565.9 987.0,566.3 989.0,566.6 991.0,566.3 993.0,564.9 995.0,562.7 997.0,560.7 999.0,557.7 1001.0,554.7 1003.0,552.5 1005.0,550.8 1007.0,548.7 1009.0,546.0 1011.0,543.8 1013.0,541.7 1015.0,539.9 1017.0,538.9 1019.0,538.0 1021.0,537.3 1023.0,537.1 1025.0,536.8 1027.0,537.0 1029.0,537.1 1031.0,538.3 1033.0,539.1 1035.0,539.9 1037.0,541.3 1039.0,543.4 1041.0,546.0 1043.0,548.7 1045.0,551.5 1047.0,554.6 1049.0,557.6 1051.0,560.8 1053.0,563.4 1055.0,566.0 1057.0,567.9 1059.0,569.7 1061.0,571.0 1063.0,571.9 1065.0,572.8 1067.0,572.9 1069.0,573.2 1071.0,573.3 1073.0,574.0 1075.0,575.1 1077.0,575.7 1079.0,575.5 1081.0,574.6 1083.0,573.1 1085.0,571.1 1087.0,569.0 1089.0,566.7 1091.0,563.9 1093.0,561.3 1095.0,558.7 1097.0,556.1 1099.0,553.1 1101.0,550.2 1103.0,547.2 1105.0,544.4 1107.0,542.3 1109.0,540.7 1111.0,539.0 1113.0,536.8 1115.0,534.4 1117.0,532.1 1119.0,530.4 1121.0,529.4 1123.0,529.0 1125.0,529.3 1127.0,529.3 1129.0,529.6 1131.0,530.0 1133.0,530.2 1135.0,530.5 1137.0,530.5 1139.0,530.6 1141.0,530.9 1143.0,531.1 1145.0,530.9 1147.0,530.4 1149.0,529.5 1151.0,528.6 1153.0,527.7 1155.0,527.1 1157.0,526.4 1159.0,525.4 1161.0,523.7 1163.0,521.1 1165.0,517.6 1167.0,513.9 1169.0,510.2 1171.0,506.5 1173.0,502.8 1175.0,499.0 1177.0,495.4 1179.0,491.8 1181.0,488.1 1183.0,484.4 1185.0,480.5 1187.0,476.8 1189.0,473.3 1191.0,470.2 1193.0,467.3 1195.0,464.4 1197.0,461.3 1199.0,458.2 1201.0,455.5 1203.0,453.2 1205.0,451.4 1207.0,449.7 1209.0,448.3 1211.0,446.8 1213.0,445.1 1215.0,443.7 1217.0,442.3 1219.0,441.0 1221.0,439.4 1223.0,437.8 1225.0,436.6 1227.0,435.6 1229.0,434.6 1231.0,433.5 1233.0,432.3 1235.0,431.1 1237.0,430.0 1239.0,428.6 1241.0,426.7 1243.0,424.8 1245.0,423.6 1247.0,422.8 1249.0,422.3 1251.0,422.0 1253.0,421.8 1255.0,421.4 1257.0,420.8 1259.0,420.2 1261.0,419.7 1263.0,419.1 1265.0,418.3 1267.0,417.2 1269.0,416.1 1271.0,414.9 1273.0,413.8 1275.0,412.9 1277.0,412.0 1279.0,411.8 1281.0,412.3 1283.0,412.9 1285.0,413.2 1287.0,413.5 1289.0,413.8 1291.0,414.3 1293.0,415.2 1295.0,416.2 1297.0,417.5 1299.0,418.8 1301.0,420.4 1303.0,422.3 1305.0,424.2 1307.0,426.2 1309.0,428.2 1311.0,429.9 1313.0,431.3 1315.0,432.5 1317.0,434.0 1319.0,435.3 1321.0,437.0 1323.0,438.9 1325.0,440.6 1327.0,442.5 1329.0,444.3 1331.0,446.2 1333.0,447.7 1335.0,448.4 1337.0,449.1 1339.0,450.0 1341.0,450.9 1343.0,451.5 1345.0,451.9 1347.0,452.6 1349.0,453.1 1351.0,453.9 1353.0,454.7 1355.0,455.3 1357.0,455.5 1359.0,455.8 1361.0,455.9 1363.0,455.2 1365.0,454.1 1367.0,451.7 1369.0,448.9 1371.0,446.3 1373.0,443.8 1375.0,442.9 1377.0,441.8 1379.0,440.3 1381.0,438.7 1383.0,437.2 1385.0,435.7 1387.0,434.3 1389.0,432.3 1391.0,428.7 1393.0,424.8 1395.0,421.2 1397.0,417.7 1399.0,413.8 1401.0,409.3 1403.0,405.2 1405.0,401.9 1407.0,399.1 1409.0,397.0 1411.0,395.2 1413.0,393.1 1415.0,389.8 1417.0,386.6 1419.0,383.5 1421.0,380.8 1423.0,378.4 1425.0,375.8 1427.0,372.9 1429.0,370.8 1431.0,370.3 1433.0,370.7 1435.0,371.1 1437.0,371.6 1439.0,372.4 1441.0,373.5 1443.0,374.9 1445.0,375.9 1447.0,377.1 1449.0,377.7 1451.0,377.1 1453.0,376.5 1455.0,376.2 1457.0,376.1 1459.0,376.6 1461.0,376.2 1463.0,375.5 1465.0,374.7 1467.0,373.7 1469.0,372.5 1471.0,371.1 1473.0,369.2 1475.0,367.2 1477.0,365.3 1479.0,363.2 1481.0,361.7" fill="none" stroke="#c8c0b4" stroke-width="1" /><polyline points="5.0,503.3 7.0,504.7 9.0,505.8 11.0,506.1 13.0,506.0 15.0,505.8 17.0,506.3 19.0,506.3 21.0,506.2 23.0,506.1 25.0,505.9 27.0,505.9 29.0,505.8 31.0,505.8 33.0,506.4 35.0,506.8 37.0,506.7 39.0,506.7 41.0,506.8 43.0,506.7 45.0,506.5 47.0,506.0 49.0,505.1 51.0,504.7 53.0,505.1 55.0,505.5 57.0,505.7 59.0,505.3 61.0,505.6 63.0,506.7 65.0,506.6 67.0,506.4 69.0,506.1 71.0,505.6 73.0,505.5 75.0,506.1 77.0,506.5 79.0,506.7 81.0,506.6 83.0,506.3 85.0,505.9 87.0,505.2 89.0,503.4 91.0,500.4 93.0,496.2 95.0,491.3 97.0,486.9 99.0,483.8 101.0,483.8 103.0,484.9 105.0,486.0 107.0,486.8 109.0,487.6 111.0,487.9 113.0,488.2 115.0,488.9 117.0,489.1 119.0,488.9 121.0,488.8 123.0,488.4 125.0,488.2 127.0,487.6 129.0,487.5 131.0,487.3 133.0,487.4 135.0,488.3 137.0,489.9 139.0,490.3 141.0,489.8 143.0,489.3 145.0,488.4 147.0,487.4 149.0,486.6 151.0,485.9 153.0,485.2 155.0,485.1 157.0,485.2 159.0,485.3 161.0,485.5 163.0,486.0 165.0,486.9 167.0,487.3 169.0,487.3 171.0,486.6 173.0,485.5 175.0,482.9 177.0,478.6 179.0,475.1 181.0,472.4 183.0,469.5 185.0,467.1 187.0,464.8 189.0,463.2 191.0,462.7 193.0,461.0 195.0,460.7 197.0,459.9 199.0,458.4 201.0,457.3 203.0,456.6 205.0,456.4 207.0,455.9 209.0,455.4 211.0,454.9 213.0,454.7 215.0,454.1 217.0,452.3 219.0,449.8 221.0,447.7 223.0,445.6 225.0,442.9 227.0,444.0 229.0,447.6 231.0,451.6 233.0,453.7 235.0,455.2 237.0,455.7 239.0,455.7 241.0,455.9 243.0,455.9 245.0,456.0 247.0,456.0 249.0,456.8 251.0,456.9 253.0,456.7 255.0,456.2 257.0,455.8 259.0,455.2 261.0,455.0 263.0,454.8 265.0,455.0 267.0,454.0 269.0,452.4 271.0,450.7 273.0,450.8 275.0,450.9 277.0,453.2 279.0,454.1 281.0,455.9 283.0,457.3 285.0,458.2 287.0,459.5 289.0,461.9 291.0,464.8 293.0,467.3 295.0,469.2 297.0,470.5 299.0,470.6 301.0,468.7 303.0,466.8 305.0,466.3 307.0,466.0 309.0,465.9 311.0,465.9 313.0,465.9 315.0,465.9 317.0,466.4 319.0,469.1 321.0,472.1 323.0,474.2 325.0,475.7 327.0,478.2 329.0,480.6 331.0,484.9 333.0,490.6 335.0,496.4 337.0,503.1 339.0,508.9 341.0,515.2 343.0,521.3 345.0,521.8 347.0,522.7 349.0,525.6 351.0,526.7 353.0,525.8 355.0,527.3 357.0,528.5 359.0,530.5 361.0,535.2 363.0,541.0 365.0,547.8 367.0,553.1 369.0,559.6 371.0,567.3 373.0,579.8 375.0,590.4 377.0,603.7 379.0,613.4 381.0,619.8 383.0,626.2 385.0,630.5 387.0,635.4 389.0,641.2 391.0,647.4 393.0,651.1 395.0,655.2 397.0,657.7 399.0,656.6 401.0,655.7 403.0,655.0 405.0,665.2 407.0,678.5 409.0,690.0 411.0,727.3 413.0,750.0 415.0,765.5 417.0,781.8 419.0,782.4 421.0,780.8 423.0,767.2 425.0,749.6 427.0,728.4 429.0,707.5 431.0,682.4 433.0,652.8 435.0,623.2 437.0,590.6 439.0,558.2 441.0,522.5 443.0,498.5 445.0,484.4 447.0,475.5 449.0,468.9 451.0,474.8 453.0,479.7 455.0,480.9 457.0,469.7 459.0,460.6 461.0,435.6 463.0,424.3 465.0,414.0 467.0,413.7 469.0,409.5 471.0,406.4 473.0,406.1 475.0,402.0 477.0,399.2 479.0,395.2 481.0,391.8 483.0,388.3 485.0,387.3 487.0,386.7 489.0,385.7 491.0,387.5 493.0,391.4 495.0,397.4 497.0,402.6 499.0,408.8 501.0,414.6 503.0,418.0 505.0,422.9 507.0,428.4 509.0,431.5 511.0,431.7 513.0,429.7 515.0,429.9 517.0,429.6 519.0,428.9 521.0,428.1 523.0,427.9 525.0,428.0 527.0,428.7 529.0,429.0 531.0,429.6 533.0,429.9 535.0,429.8 537.0,429.5 539.0,428.4 541.0,426.3 543.0,424.1 545.0,420.1 547.0,413.0 549.0,405.6 551.0,400.1 553.0,396.7 555.0,391.5 557.0,386.9 559.0,383.7 561.0,381.9 563.0,380.3 565.0,379.9 567.0,380.8 569.0,381.4 571.0,383.0 573.0,382.8 575.0,382.5 577.0,382.3 579.0,382.1 581.0,382.4 583.0,383.0 585.0,383.2 587.0,382.9 589.0,383.0 591.0,382.7 593.0,383.1 595.0,383.4 597.0,383.7 599.0,383.9 601.0,383.8 603.0,383.6 605.0,383.4 607.0,382.9 609.0,382.6 611.0,381.4 613.0,381.8 615.0,382.4 617.0,382.2 619.0,383.1 621.0,388.7 623.0,390.2 625.0,392.1 627.0,396.0 629.0,400.2 631.0,403.9 633.0,409.4 635.0,415.3 637.0,421.8 639.0,428.6 641.0,434.0 643.0,437.6 645.0,440.0 647.0,442.4 649.0,443.4 651.0,445.1 653.0,447.0 655.0,449.3 657.0,452.6 659.0,454.3 661.0,455.2 663.0,454.3 665.0,452.3 667.0,451.1 669.0,450.1 671.0,449.0 673.0,448.8 675.0,449.0 677.0,449.0 679.0,448.9 681.0,448.6 683.0,448.6 685.0,448.8 687.0,449.3 689.0,450.7 691.0,451.7 693.0,452.3 695.0,452.7 697.0,451.9 699.0,452.8 701.0,454.1 703.0,456.0 705.0,457.4 707.0,459.4 709.0,460.6 711.0,461.1 713.0,461.7 715.0,462.3 717.0,463.0 719.0,463.8 721.0,463.2 723.0,461.8 725.0,460.7 727.0,460.0 729.0,460.1 731.0,459.9 733.0,460.6 735.0,462.3 737.0,462.9 739.0,463.9 741.0,464.7 743.0,465.0 745.0,465.0 747.0,463.5 749.0,462.6 751.0,461.2 753.0,459.9 755.0,458.6 757.0,456.4 759.0,454.0 761.0,451.1 763.0,448.8 765.0,447.3 767.0,450.5 769.0,455.3 771.0,468.9 773.0,480.8 775.0,501.2 777.0,520.4 779.0,539.3 781.0,556.1 783.0,572.7 785.0,587.6 787.0,600.0 789.0,610.4 791.0,619.4 793.0,625.3 795.0,628.1 797.0,629.2 799.0,628.5 801.0,625.5 803.0,621.4 805.0,616.0 807.0,611.2 809.0,605.3 811.0,603.0 813.0,600.4 815.0,600.4 817.0,600.4 819.0,599.2 821.0,597.6 823.0,594.3 825.0,589.2 827.0,584.0 829.0,577.5 831.0,569.5 833.0,562.9 835.0,559.4 837.0,556.7 839.0,554.6 841.0,553.2 843.0,552.1 845.0,551.3 847.0,550.2 849.0,548.0 851.0,544.4 853.0,540.6 855.0,538.4 857.0,539.4 859.0,541.6 861.0,545.4 863.0,550.2 865.0,557.6 867.0,562.2 869.0,565.1 871.0,567.0 873.0,569.3 875.0,571.1 877.0,572.6 879.0,573.0 881.0,573.2 883.0,572.9 885.0,572.6 887.0,571.9 889.0,571.7 891.0,572.5 893.0,572.0 895.0,575.5 897.0,579.7 899.0,585.9 901.0,591.0 903.0,597.0 905.0,604.5 907.0,610.8 909.0,614.1 911.0,615.6 913.0,616.3 915.0,617.2 917.0,617.6 919.0,621.1 921.0,621.9 923.0,622.1 925.0,621.7 927.0,620.7 929.0,621.6 931.0,622.3 933.0,623.3 935.0,624.3 937.0,624.4 939.0,624.4 941.0,623.3 943.0,620.8 945.0,615.9 947.0,610.5 949.0,607.1 951.0,604.6 953.0,603.1 955.0,602.0 957.0,600.8 959.0,594.2 961.0,589.9 963.0,584.3 965.0,580.0 967.0,578.6 969.0,579.5 971.0,579.5 973.0,579.8 975.0,579.8 977.0,579.7 979.0,579.5 981.0,579.7 983.0,580.1 985.0,580.5 987.0,580.7 989.0,580.2 991.0,581.0 993.0,581.4 995.0,579.9 997.0,580.0 999.0,578.8 1001.0,578.1 1003.0,578.7 1005.0,579.3 1007.0,579.2 1009.0,577.0 1011.0,575.6 1013.0,573.1 1015.0,571.5 1017.0,569.5 1019.0,567.4 1021.0,565.4 1023.0,564.6 1025.0,563.7 1027.0,564.4 1029.0,564.8 1031.0,567.7 1033.0,569.4 1035.0,570.7 1037.0,573.0 1039.0,575.3 1041.0,577.8 1043.0,580.3 1045.0,582.4 1047.0,584.5 1049.0,585.6 1051.0,586.0 1053.0,585.4 1055.0,582.7 1057.0,582.6 1059.0,582.8 1061.0,582.9 1063.0,584.4 1065.0,585.5 1067.0,585.6 1069.0,585.3 1071.0,585.3 1073.0,585.2 1075.0,584.2 1077.0,583.8 1079.0,584.1 1081.0,586.6 1083.0,589.1 1085.0,591.6 1087.0,591.8 1089.0,592.5 1091.0,592.7 1093.0,592.7 1095.0,592.1 1097.0,590.5 1099.0,588.0 1101.0,585.6 1103.0,581.5 1105.0,576.9 1107.0,573.7 1109.0,570.7 1111.0,567.5 1113.0,562.2 1115.0,555.4 1117.0,547.6 1119.0,541.9 1121.0,538.4 1123.0,536.9 1125.0,538.1 1127.0,538.1 1129.0,538.5 1131.0,538.9 1133.0,538.9 1135.0,538.9 1137.0,538.8 1139.0,538.7 1141.0,538.4 1143.0,538.2 1145.0,538.3 1147.0,538.7 1149.0,538.8 1151.0,538.8 1153.0,538.6 1155.0,538.7 1157.0,538.8 1159.0,539.3 1161.0,540.5 1163.0,542.2 1165.0,543.4 1167.0,543.6 1169.0,543.9 1171.0,543.2 1173.0,542.2 1175.0,540.7 1177.0,538.5 1179.0,536.0 1181.0,532.4 1183.0,528.1 1185.0,523.6 1187.0,519.1 1189.0,514.2 1191.0,508.5 1193.0,502.2 1195.0,494.9 1197.0,486.5 1199.0,477.6 1201.0,470.2 1203.0,465.2 1205.0,463.1 1207.0,461.6 1209.0,461.0 1211.0,460.6 1213.0,460.5 1215.0,460.2 1217.0,459.4 1219.0,458.6 1221.0,457.7 1223.0,456.8 1225.0,456.0 1227.0,455.1 1229.0,453.8 1231.0,451.4 1233.0,448.0 1235.0,444.1 1237.0,440.6 1239.0,438.0 1241.0,438.7 1243.0,438.8 1245.0,437.7 1247.0,436.7 1249.0,435.9 1251.0,435.4 1253.0,435.2 1255.0,434.8 1257.0,434.3 1259.0,433.8 1261.0,433.7 1263.0,433.7 1265.0,433.4 1267.0,432.7 1269.0,431.7 1271.0,429.9 1273.0,427.0 1275.0,424.1 1277.0,421.7 1279.0,421.1 1281.0,420.9 1283.0,420.6 1285.0,421.1 1287.0,421.9 1289.0,423.3 1291.0,425.0 1293.0,428.3 1295.0,431.5 1297.0,434.4 1299.0,437.3 1301.0,440.4 1303.0,443.3 1305.0,446.0 1307.0,447.9 1309.0,449.4 1311.0,450.2 1313.0,450.6 1315.0,451.1 1317.0,451.5 1319.0,451.6 1321.0,451.4 1323.0,451.5 1325.0,451.6 1327.0,453.0 1329.0,456.3 1331.0,459.6 1333.0,462.4 1335.0,462.9 1337.0,463.2 1339.0,463.8 1341.0,465.0 1343.0,465.6 1345.0,466.0 1347.0,466.5 1349.0,466.8 1351.0,467.0 1353.0,466.7 1355.0,466.1 1357.0,465.9 1359.0,465.2 1361.0,465.2 1363.0,466.0 1365.0,468.0 1367.0,471.7 1369.0,473.0 1371.0,471.7 1373.0,469.9 1375.0,468.8 1377.0,467.9 1379.0,466.3 1381.0,463.8 1383.0,461.8 1385.0,459.6 1387.0,456.9 1389.0,454.7 1391.0,454.2 1393.0,453.7 1395.0,452.6 1397.0,451.3 1399.0,449.3 1401.0,447.5 1403.0,445.5 1405.0,443.7 1407.0,443.6 1409.0,442.6 1411.0,440.6 1413.0,438.2 1415.0,433.0 1417.0,427.9 1419.0,423.0 1421.0,416.8 1423.0,410.5 1425.0,403.1 1427.0,392.5 1429.0,383.3 1431.0,381.7 1433.0,382.9 1435.0,384.3 1437.0,385.7 1439.0,387.3 1441.0,387.5 1443.0,388.3 1445.0,388.7 1447.0,387.9 1449.0,387.8 1451.0,387.6 1453.0,387.8 1455.0,388.3 1457.0,388.4 1459.0,388.1 1461.0,388.0 1463.0,388.0 1465.0,388.6 1467.0,389.4 1469.0,390.4 1471.0,390.8 1473.0,389.9 1475.0,388.2 1477.0,386.0 1479.0,383.8 1481.0,382.1" fill="none" stroke="#c8c0b4" stroke-width="1" /><polyline points="5.0,418.0 7.0,420.0 9.0,422.0 11.0,423.9 13.0,425.9 15.0,427.9 17.0,429.9 19.0,431.8 21.0,433.8 23.0,435.8 25.0,437.8 27.0,439.7 29.0,441.7 31.0,443.7 33.0,445.7 35.0,447.7 37.0,449.6 39.0,451.6 41.0,453.6 43.0,455.6 45.0,457.5 47.0,459.5 49.0,461.5 51.0,463.5 53.0,465.4 55.0,467.4 57.0,469.3 59.0,470.7 61.0,472.1 63.0,473.5 65.0,474.9 67.0,476.3 69.0,477.7 71.0,479.1 73.0,480.5 75.0,482.0 77.0,483.4 79.0,484.8 81.0,486.2 83.0,487.6 85.0,489.0 87.0,489.7 89.0,490.4 91.0,491.1 93.0,491.9 95.0,492.6 97.0,493.3 99.0,494.0 101.0,494.7 103.0,495.4 105.0,496.1 107.0,496.9 109.0,497.6 111.0,498.3 113.0,499.0 115.0,499.0 117.0,499.1 119.0,499.1 121.0,499.2 123.0,499.2 125.0,499.3 127.0,499.3 129.0,499.4 131.0,499.4 133.0,499.5 135.0,499.5 137.0,499.6 139.0,499.6 141.0,499.7 143.0,499.7 145.0,499.8 147.0,499.8 149.0,499.8 151.0,499.9 153.0,499.9 155.0,500.0 157.0,499.7 159.0,499.4 161.0,499.0 163.0,498.6 165.0,498.2 167.0,497.9 169.0,497.5 171.0,497.1 173.0,496.8 175.0,496.4 177.0,496.0 179.0,495.6 181.0,495.3 183.0,494.9 185.0,494.4 187.0,493.8 189.0,493.1 191.0,492.5 193.0,491.9 195.0,491.3 197.0,490.7 199.0,490.0 201.0,489.4 203.0,488.8 205.0,488.2 207.0,487.6 209.0,486.9 211.0,486.3 213.0,485.7 215.0,485.1 217.0,484.6 219.0,484.0 221.0,483.4 223.0,482.9 225.0,482.3 227.0,481.7 229.0,481.1 231.0,480.6 233.0,480.0 235.0,479.4 237.0,478.9 239.0,478.3 241.0,477.8 243.0,477.2 245.0,476.8 247.0,476.2 249.0,475.8 251.0,475.2 253.0,474.8 255.0,474.2 257.0,473.8 259.0,473.3 261.0,472.9 263.0,472.5 265.0,472.2 267.0,471.8 269.0,471.4 271.0,471.0 273.0,470.6 275.0,470.2 277.0,469.8 279.0,469.5 281.0,469.1 283.0,468.7 285.0,468.3 287.0,467.9 289.0,467.5 291.0,467.1 293.0,466.6 295.0,466.2 297.0,465.8 299.0,465.4 301.0,465.0 303.0,464.5 305.0,464.1 307.0,463.7 309.0,463.3 311.0,462.8 313.0,462.4 315.0,462.0 317.0,462.0 319.0,462.0 321.0,462.0 323.0,462.0 325.0,462.0 327.0,462.0 329.0,462.0 331.0,462.0 333.0,462.0 335.0,462.0 337.0,462.0 339.0,462.0 341.0,462.0 343.0,462.0 345.0,462.6 347.0,463.2 349.0,463.8 351.0,464.5 353.0,465.1 355.0,465.7 357.0,466.3 359.0,466.9 361.0,467.5 363.0,468.1 365.0,468.8 367.0,469.4 369.0,470.0 371.0,470.6 373.0,471.4 375.0,472.2 377.0,473.0 379.0,473.7 381.0,474.5 383.0,475.3 385.0,476.1 387.0,476.9 389.0,477.7 391.0,478.5 393.0,479.2 395.0,480.0 397.0,480.8 399.0,481.6 401.0,482.0 403.0,482.0 405.0,482.0 407.0,482.0 409.0,482.0 411.0,481.0 413.0,479.0 415.0,477.0 417.0,475.0 419.0,473.0 421.0,471.0 423.0,469.0 425.0,467.5 427.0,466.6 429.0,465.7 431.0,464.8 433.0,463.9 435.0,463.0 437.0,462.1 439.0,461.2 441.0,460.3 443.0,459.4 445.0,458.5 447.0,457.6 449.0,456.7 451.0,455.8 453.0,454.9 455.0,454.0 457.0,453.1 459.0,452.2 461.0,451.3 463.0,450.8 465.0,450.5 467.0,450.2 469.0,449.9 471.0,449.6 473.0,449.3 475.0,449.0 477.0,448.7 479.0,448.4 481.0,448.1 483.0,447.8 485.0,447.5 487.0,447.2 489.0,446.9 491.0,446.6 493.0,446.3 495.0,446.0 497.0,445.7 499.0,445.4 501.0,445.1 503.0,444.8 505.0,444.5 507.0,444.2 509.0,443.9 511.0,443.6 513.0,443.3 515.0,443.0 517.0,442.7 519.0,442.4 521.0,442.0 523.0,441.7 525.0,441.4 527.0,441.1 529.0,440.8 531.0,440.5 533.0,440.2 535.0,439.8 537.0,439.5 539.0,439.2 541.0,438.9 543.0,438.6 545.0,438.3 547.0,438.0 549.0,437.6 551.0,437.3 553.0,437.0 555.0,436.7 557.0,435.9 559.0,435.1 561.0,434.2 563.0,433.4 565.0,432.6 567.0,431.8 569.0,431.0 571.0,430.1 573.0,429.3 575.0,428.5 577.0,428.0 579.0,427.5 581.0,427.0 583.0,426.5 585.0,426.0 587.0,425.6 589.0,425.1 591.0,424.6 593.0,424.1 595.0,423.6 597.0,423.1 599.0,422.6 601.0,422.1 603.0,421.6 605.0,421.1 607.0,420.7 609.0,420.2 611.0,419.8 613.0,419.3 615.0,418.8 617.0,418.4 619.0,417.9 621.0,417.5 623.0,417.0 625.0,416.5 627.0,416.1 629.0,415.6 631.0,415.2 633.0,414.7 635.0,414.2 637.0,413.8 639.0,413.4 641.0,413.0 643.0,412.6 645.0,412.2 647.0,411.8 649.0,411.4 651.0,411.0 653.0,410.6 655.0,410.2 657.0,409.8 659.0,409.4 661.0,409.0 663.0,408.6 665.0,408.2 667.0,407.4 669.0,406.1 671.0,404.9 673.0,403.6 675.0,402.4 677.0,401.1 679.0,399.9 681.0,398.6 683.0,397.4 685.0,396.1 687.0,394.9 689.0,393.6 691.0,392.5 693.0,391.3 695.0,390.2 697.0,389.0 699.0,387.9 701.0,386.7 703.0,385.6 705.0,385.1 707.0,385.4 709.0,385.6 711.0,385.9 713.0,387.0 715.0,388.6 717.0,390.2 719.0,391.7 721.0,393.3 723.0,394.9 725.0,396.4 727.0,398.0 729.0,398.3 731.0,398.7 733.0,399.0 735.0,399.3 737.0,399.7 739.0,400.0 741.0,400.3 743.0,400.7 745.0,401.0 747.0,401.9 749.0,402.8 751.0,403.7 753.0,404.6 755.0,405.5 757.0,406.4 759.0,407.3 761.0,408.2 763.0,409.1 765.0,410.0 767.0,411.1 769.0,412.3 771.0,413.4 773.0,414.6 775.0,415.8 777.0,416.9 779.0,418.1 781.0,419.3 783.0,420.4 785.0,421.6 787.0,422.8 789.0,424.0 791.0,425.1 793.0,426.2 795.0,427.2 797.0,428.1 799.0,429.1 801.0,430.0 803.0,430.9 805.0,431.9 807.0,432.8 809.0,433.8 811.0,434.7 813.0,435.7 815.0,436.6 817.0,437.5 819.0,438.5 821.0,439.4 823.0,440.4 825.0,441.3 827.0,442.2 829.0,443.2 831.0,444.1 833.0,445.1 835.0,446.2 837.0,447.3 839.0,448.4 841.0,449.4 843.0,450.5 845.0,451.6 847.0,452.7 849.0,453.8 851.0,454.8 853.0,455.9 855.0,457.0 857.0,458.1 859.0,459.1 861.0,460.2 863.0,461.3 865.0,462.4 867.0,463.4 869.0,464.5 871.0,465.6 873.0,467.1 875.0,468.5 877.0,470.0 879.0,471.4 881.0,472.9 883.0,474.4 885.0,475.8 887.0,477.3 889.0,478.7 891.0,480.2 893.0,481.7 895.0,483.1 897.0,484.6 899.0,486.0 901.0,487.5 903.0,489.0 905.0,490.4 907.0,491.9 909.0,493.3 911.0,494.7 913.0,495.6 915.0,496.5 917.0,497.4 919.0,498.2 921.0,499.1 923.0,500.0 925.0,500.9 927.0,501.8 929.0,502.7 931.0,503.6 933.0,504.5 935.0,505.4 937.0,506.3 939.0,507.2 941.0,508.1 943.0,509.2 945.0,510.2 947.0,511.3 949.0,512.3 951.0,513.4 953.0,514.4 955.0,515.5 957.0,516.4 959.0,517.3 961.0,518.1 963.0,519.0 965.0,519.9 967.0,520.7 969.0,521.6 971.0,522.4 973.0,523.3 975.0,524.1 977.0,525.0 979.0,525.8 981.0,526.7 983.0,527.6 985.0,528.4 987.0,529.3 989.0,530.1 991.0,531.0 993.0,531.8 995.0,532.7 997.0,533.4 999.0,534.1 1001.0,534.8 1003.0,535.5 1005.0,536.2 1007.0,536.9 1009.0,537.6 1011.0,538.3 1013.0,538.9 1015.0,539.6 1017.0,540.3 1019.0,541.0 1021.0,541.7 1023.0,542.4 1025.0,543.1 1027.0,543.8 1029.0,544.4 1031.0,545.1 1033.0,545.8 1035.0,546.5 1037.0,547.2 1039.0,547.8 1041.0,548.5 1043.0,549.2 1045.0,549.8 1047.0,550.5 1049.0,551.1 1051.0,551.8 1053.0,552.5 1055.0,553.1 1057.0,553.8 1059.0,554.5 1061.0,555.1 1063.0,555.8 1065.0,556.4 1067.0,557.1 1069.0,557.8 1071.0,558.4 1073.0,559.1 1075.0,559.6 1077.0,559.4 1079.0,559.2 1081.0,559.0 1083.0,558.8 1085.0,558.6 1087.0,558.4 1089.0,558.2 1091.0,558.0 1093.0,557.8 1095.0,557.6 1097.0,557.4 1099.0,557.2 1101.0,557.0 1103.0,556.9 1105.0,556.9 1107.0,556.8 1109.0,556.8 1111.0,556.8 1113.0,556.7 1115.0,556.7 1117.0,556.6 1119.0,556.6 1121.0,556.5 1123.0,556.5 1125.0,556.4 1127.0,556.4 1129.0,556.3 1131.0,556.3 1133.0,556.2 1135.0,556.1 1137.0,556.1 1139.0,556.0 1141.0,556.0 1143.0,555.9 1145.0,555.8 1147.0,555.8 1149.0,555.7 1151.0,555.7 1153.0,555.6 1155.0,555.5 1157.0,555.2 1159.0,554.5 1161.0,553.8 1163.0,553.1 1165.0,552.4 1167.0,551.7 1169.0,551.0 1171.0,550.3 1173.0,549.6 1175.0,548.9 1177.0,548.2 1179.0,547.5 1181.0,546.8 1183.0,546.1 1185.0,545.4 1187.0,544.7 1189.0,544.0 1191.0,543.3 1193.0,542.7 1195.0,542.0 1197.0,541.3 1199.0,540.6 1201.0,539.9 1203.0,539.2 1205.0,538.5 1207.0,537.8 1209.0,537.1 1211.0,536.4 1213.0,535.6 1215.0,534.8 1217.0,534.0 1219.0,533.2 1221.0,532.4 1223.0,531.6 1225.0,530.8 1227.0,530.0 1229.0,529.2 1231.0,528.4 1233.0,527.6 1235.0,526.8 1237.0,526.0 1239.0,525.1 1241.0,524.3 1243.0,523.5 1245.0,522.7 1247.0,521.9 1249.0,521.1 1251.0,520.3 1253.0,519.5 1255.0,518.7 1257.0,517.9 1259.0,517.1 1261.0,516.3 1263.0,515.5 1265.0,514.7 1267.0,513.3 1269.0,511.7 1271.0,510.1 1273.0,508.5 1275.0,506.9 1277.0,505.3 1279.0,503.7 1281.0,502.1 1283.0,500.5 1285.0,498.9 1287.0,497.3 1289.0,495.7 1291.0,494.1 1293.0,492.6 1295.0,492.1 1297.0,491.6 1299.0,491.0 1301.0,490.5 1303.0,490.0 1305.0,489.5 1307.0,488.9 1309.0,488.4 1311.0,487.9 1313.0,487.3 1315.0,486.8 1317.0,486.3 1319.0,485.8 1321.0,485.1 1323.0,484.2 1325.0,483.3 1327.0,482.5 1329.0,481.6 1331.0,480.7 1333.0,479.8 1335.0,478.8 1337.0,477.8 1339.0,476.7 1341.0,475.7 1343.0,474.6 1345.0,473.6 1347.0,472.6 1349.0,471.5 1351.0,470.5 1353.0,469.4 1355.0,468.4 1357.0,467.4 1359.0,466.3 1361.0,465.3 1363.0,464.3 1365.0,463.2 1367.0,462.2 1369.0,461.1 1371.0,460.1 1373.0,459.2 1375.0,458.3 1377.0,457.4 1379.0,456.5 1381.0,455.6 1383.0,454.7 1385.0,453.8 1387.0,452.9 1389.0,452.0 1391.0,451.1 1393.0,450.2 1395.0,449.3 1397.0,448.4 1399.0,447.5 1401.0,446.6 1403.0,445.7 1405.0,444.8 1407.0,443.8 1409.0,442.9 1411.0,442.0 1413.0,441.1 1415.0,440.2 1417.0,439.3 1419.0,438.4 1421.0,437.5 1423.0,436.6 1425.0,435.7 1427.0,434.8 1429.0,433.9 1431.0,433.0 1433.0,432.2 1435.0,431.4 1437.0,430.6 1439.0,429.8 1441.0,429.0 1443.0,428.2 1445.0,427.4 1447.0,426.6 1449.0,425.8 1451.0,425.0 1453.0,424.2 1455.0,423.4 1457.0,422.6 1459.0,421.8 1461.0,421.0 1463.0,420.2 1465.0,419.4 1467.0,418.6 1469.0,417.8 1471.0,417.0 1473.0,416.2 1475.0,415.4 1477.0,414.6 1479.0,413.8 1481.0,413.0" fill="none" stroke="#14147a" stroke-width="1.0" /><polyline points="5.0,501.7 7.0,502.1 9.0,502.6 11.0,503.0 13.0,503.5 15.0,503.9 17.0,504.3 19.0,504.8 21.0,505.2 23.0,505.6 25.0,506.1 27.0,506.5 29.0,507.0 31.0,507.4 33.0,507.8 35.0,508.3 37.0,508.7 39.0,509.2 41.0,509.6 43.0,510.0 45.0,510.5 47.0,510.9 49.0,511.3 51.0,511.8 53.0,512.0 55.0,512.0 57.0,512.0 59.0,512.0 61.0,512.0 63.0,512.0 65.0,512.0 67.0,511.5 69.0,510.9 71.0,510.4 73.0,509.8 75.0,509.3 77.0,508.8 79.0,508.2 81.0,507.7 83.0,507.1 85.0,506.6 87.0,506.0 89.0,505.5 91.0,505.0 93.0,504.4 95.0,503.9 97.0,503.3 99.0,502.8 101.0,502.2 103.0,501.7 105.0,501.2 107.0,500.6 109.0,500.1 111.0,499.5 113.0,499.0 115.0,498.7 117.0,498.3 119.0,498.0 121.0,497.7 123.0,497.4 125.0,497.0 127.0,496.7 129.0,496.4 131.0,496.0 133.0,495.7 135.0,495.4 137.0,495.1 139.0,494.7 141.0,494.4 143.0,494.1 145.0,493.7 147.0,493.4 149.0,493.1 151.0,492.8 153.0,492.4 155.0,492.1 157.0,491.5 159.0,490.8 161.0,490.1 163.0,489.4 165.0,488.7 167.0,488.0 169.0,487.3 171.0,486.6 173.0,485.9 175.0,485.2 177.0,484.5 179.0,483.8 181.0,483.1 183.0,482.4 185.0,481.6 187.0,480.8 189.0,480.0 191.0,479.1 193.0,478.3 195.0,477.5 197.0,476.7 199.0,475.9 201.0,475.1 203.0,474.3 205.0,473.5 207.0,472.6 209.0,471.8 211.0,471.0 213.0,470.3 215.0,469.8 217.0,469.2 219.0,468.7 221.0,468.1 223.0,467.5 225.0,467.0 227.0,466.4 229.0,465.9 231.0,465.3 233.0,464.8 235.0,464.2 237.0,463.6 239.0,463.1 241.0,462.5 243.0,461.9 245.0,461.4 247.0,460.8 249.0,460.2 251.0,459.7 253.0,459.1 255.0,458.5 257.0,458.0 259.0,457.4 261.0,456.8 263.0,456.3 265.0,455.7 267.0,455.1 269.0,454.6 271.0,454.0 273.0,453.6 275.0,453.4 277.0,453.3 279.0,453.2 281.0,453.1 283.0,453.0 285.0,452.8 287.0,452.7 289.0,452.6 291.0,452.5 293.0,452.3 295.0,452.2 297.0,452.1 299.0,452.0 301.0,451.9 303.0,451.7 305.0,451.6 307.0,451.5 309.0,451.4 311.0,451.2 313.0,451.1 315.0,451.0 317.0,451.2 319.0,451.5 321.0,451.7 323.0,452.0 325.0,452.2 327.0,452.5 329.0,452.7 331.0,453.0 333.0,453.2 335.0,453.5 337.0,453.7 339.0,453.8 341.0,453.9 343.0,454.1 345.0,454.2 347.0,454.3 349.0,454.5 351.0,454.6 353.0,454.7 355.0,454.9 357.0,455.0 359.0,456.0 361.0,456.9 363.0,457.9 365.0,458.9 367.0,459.9 369.0,460.8 371.0,461.8 373.0,463.5 375.0,465.4 377.0,467.3 379.0,469.1 381.0,471.0 383.0,472.9 385.0,474.8 387.0,476.6 389.0,478.5 391.0,480.4 393.0,482.3 395.0,484.2 397.0,486.2 399.0,488.1 401.0,490.0 403.0,491.9 405.0,493.0 407.0,492.0 409.0,491.0 411.0,490.0 413.0,489.0 415.0,487.4 417.0,485.7 419.0,484.1 421.0,482.4 423.0,480.8 425.0,479.1 427.0,477.5 429.0,475.8 431.0,474.5 433.0,473.6 435.0,472.6 437.0,471.7 439.0,470.7 441.0,469.8 443.0,468.8 445.0,467.9 447.0,467.0 449.0,466.0 451.0,465.1 453.0,464.1 455.0,463.2 457.0,462.2 459.0,461.3 461.0,460.3 463.0,459.6 465.0,459.0 467.0,458.3 469.0,457.7 471.0,457.1 473.0,456.5 475.0,455.8 477.0,455.2 479.0,454.6 481.0,453.9 483.0,453.3 485.0,452.7 487.0,452.1 489.0,451.6 491.0,451.0 493.0,450.4 495.0,449.9 497.0,449.3 499.0,448.7 501.0,448.1 503.0,447.6 505.0,447.0 507.0,446.3 509.0,445.5 511.0,444.7 513.0,443.9 515.0,443.1 517.0,442.2 519.0,441.4 521.0,440.6 523.0,439.8 525.0,439.0 527.0,438.2 529.0,437.1 531.0,435.8 533.0,434.5 535.0,433.2 537.0,431.9 539.0,430.5 541.0,429.2 543.0,427.9 545.0,426.6 547.0,425.3 549.0,424.0 551.0,422.6 553.0,421.3 555.0,420.0 557.0,418.1 559.0,416.2 561.0,414.3 563.0,412.4 565.0,410.5 567.0,408.6 569.0,406.7 571.0,404.8 573.0,402.9 575.0,401.0 577.0,398.5 579.0,395.9 581.0,393.3 583.0,390.8 585.0,388.2 587.0,385.7 589.0,383.1 591.0,380.6 593.0,378.0 595.0,375.5 597.0,373.8 599.0,372.1 601.0,370.3 603.0,368.6 605.0,366.9 607.0,365.2 609.0,363.5 611.0,363.5 613.0,365.4 615.0,367.3 617.0,369.1 619.0,371.0 621.0,372.1 623.0,373.2 625.0,374.3 627.0,375.4 629.0,376.5 631.0,377.3 633.0,377.9 635.0,378.4 637.0,379.0 639.0,379.6 641.0,380.1 643.0,380.7 645.0,381.3 647.0,381.9 649.0,382.4 651.0,383.0 653.0,384.2 655.0,385.4 657.0,386.6 659.0,387.8 661.0,389.0 663.0,390.2 665.0,391.4 667.0,392.4 669.0,393.1 671.0,393.8 673.0,394.5 675.0,395.2 677.0,395.9 679.0,396.6 681.0,397.3 683.0,398.0 685.0,398.7 687.0,399.4 689.0,400.1 691.0,400.8 693.0,401.5 695.0,402.2 697.0,402.8 699.0,403.3 701.0,403.8 703.0,404.3 705.0,404.7 707.0,405.2 709.0,405.7 711.0,406.2 713.0,406.6 715.0,407.1 717.0,407.6 719.0,408.1 721.0,408.6 723.0,409.0 725.0,409.5 727.0,410.0 729.0,410.6 731.0,411.1 733.0,411.7 735.0,412.2 737.0,412.8 739.0,413.3 741.0,413.9 743.0,414.4 745.0,415.0 747.0,415.6 749.0,416.1 751.0,416.7 753.0,417.3 755.0,417.9 757.0,418.4 759.0,419.0 761.0,419.6 763.0,420.1 765.0,420.7 767.0,421.9 769.0,423.7 771.0,425.5 773.0,427.2 775.0,429.0 777.0,430.8 779.0,432.6 781.0,434.4 783.0,436.1 785.0,437.9 787.0,439.7 789.0,441.5 791.0,443.3 793.0,445.1 795.0,447.0 797.0,448.9 799.0,450.8 801.0,452.7 803.0,454.6 805.0,456.5 807.0,458.4 809.0,460.3 811.0,462.3 813.0,464.2 815.0,466.1 817.0,468.0 819.0,469.7 821.0,470.7 823.0,471.6 825.0,472.5 827.0,473.4 829.0,474.3 831.0,475.3 833.0,476.2 835.0,477.1 837.0,478.0 839.0,478.9 841.0,479.9 843.0,480.8 845.0,481.7 847.0,482.6 849.0,483.5 851.0,484.6 853.0,485.9 855.0,487.1 857.0,488.3 859.0,489.6 861.0,490.8 863.0,492.0 865.0,493.3 867.0,494.5 869.0,495.8 871.0,497.0 873.0,498.4 875.0,499.8 877.0,501.2 879.0,502.6 881.0,504.0 883.0,505.4 885.0,506.8 887.0,508.2 889.0,509.6 891.0,511.0 893.0,512.4 895.0,513.8 897.0,515.2 899.0,516.4 901.0,517.6 903.0,518.8 905.0,519.9 907.0,521.1 909.0,522.3 911.0,523.5 913.0,524.7 915.0,525.9 917.0,527.0 919.0,528.2 921.0,529.4 923.0,530.6 925.0,531.9 927.0,533.2 929.0,534.5 931.0,535.8 933.0,537.1 935.0,538.4 937.0,539.7 939.0,541.0 941.0,542.4 943.0,543.7 945.0,545.0 947.0,546.4 949.0,547.7 951.0,549.0 953.0,550.4 955.0,551.7 957.0,553.0 959.0,554.3 961.0,555.7 963.0,557.0 965.0,558.3 967.0,559.7 969.0,561.0 971.0,560.7 973.0,560.5 975.0,560.2 977.0,559.9 979.0,559.7 981.0,559.4 983.0,559.1 985.0,558.9 987.0,558.6 989.0,558.3 991.0,558.1 993.0,557.8 995.0,557.5 997.0,557.3 999.0,557.0 1001.0,556.7 1003.0,556.5 1005.0,556.2 1007.0,555.9 1009.0,555.7 1011.0,556.1 1013.0,556.5 1015.0,556.9 1017.0,557.3 1019.0,557.7 1021.0,558.1 1023.0,558.5 1025.0,558.9 1027.0,559.3 1029.0,559.7 1031.0,560.1 1033.0,560.5 1035.0,560.9 1037.0,561.3 1039.0,561.7 1041.0,562.1 1043.0,562.5 1045.0,562.9 1047.0,563.3 1049.0,563.6 1051.0,563.8 1053.0,564.0 1055.0,564.2 1057.0,564.3 1059.0,564.5 1061.0,564.7 1063.0,564.9 1065.0,565.1 1067.0,565.3 1069.0,565.5 1071.0,565.7 1073.0,565.9 1075.0,566.0 1077.0,565.8 1079.0,565.6 1081.0,565.4 1083.0,565.2 1085.0,565.0 1087.0,564.8 1089.0,564.6 1091.0,564.4 1093.0,564.2 1095.0,564.0 1097.0,563.9 1099.0,563.7 1101.0,563.4 1103.0,562.6 1105.0,561.8 1107.0,561.0 1109.0,560.2 1111.0,559.5 1113.0,558.7 1115.0,557.9 1117.0,557.1 1119.0,556.3 1121.0,555.5 1123.0,554.7 1125.0,554.0 1127.0,553.2 1129.0,552.4 1131.0,551.8 1133.0,551.2 1135.0,550.8 1137.0,550.2 1139.0,549.8 1141.0,549.2 1143.0,548.8 1145.0,548.2 1147.0,547.8 1149.0,547.2 1151.0,546.8 1153.0,546.2 1155.0,545.8 1157.0,545.0 1159.0,544.1 1161.0,543.2 1163.0,542.3 1165.0,541.3 1167.0,540.4 1169.0,539.5 1171.0,538.5 1173.0,537.6 1175.0,536.7 1177.0,535.8 1179.0,534.8 1181.0,533.9 1183.0,533.0 1185.0,532.1 1187.0,531.1 1189.0,530.2 1191.0,529.3 1193.0,528.3 1195.0,527.4 1197.0,526.5 1199.0,525.6 1201.0,524.6 1203.0,523.7 1205.0,522.8 1207.0,521.9 1209.0,520.9 1211.0,520.0 1213.0,518.5 1215.0,516.9 1217.0,515.4 1219.0,513.8 1221.0,512.3 1223.0,510.8 1225.0,509.2 1227.0,507.7 1229.0,506.1 1231.0,504.6 1233.0,503.0 1235.0,501.5 1237.0,500.0 1239.0,498.4 1241.0,496.9 1243.0,495.3 1245.0,493.8 1247.0,492.3 1249.0,490.7 1251.0,489.2 1253.0,487.6 1255.0,486.1 1257.0,484.6 1259.0,483.0 1261.0,481.5 1263.0,479.9 1265.0,478.4 1267.0,477.2 1269.0,476.1 1271.0,475.1 1273.0,474.0 1275.0,473.0 1277.0,471.9 1279.0,470.9 1281.0,469.8 1283.0,468.7 1285.0,467.7 1287.0,466.6 1289.0,465.6 1291.0,464.5 1293.0,463.5 1295.0,462.5 1297.0,461.6 1299.0,460.7 1301.0,459.8 1303.0,458.8 1305.0,457.9 1307.0,457.0 1309.0,456.1 1311.0,455.2 1313.0,454.2 1315.0,453.3 1317.0,452.4 1319.0,451.5 1321.0,450.6 1323.0,449.6 1325.0,448.8 1327.0,447.9 1329.0,447.0 1331.0,446.1 1333.0,445.1 1335.0,444.2 1337.0,443.4 1339.0,442.4 1341.0,441.7 1343.0,441.1 1345.0,440.5 1347.0,439.9 1349.0,439.4 1351.0,438.8 1353.0,438.2 1355.0,437.6 1357.0,437.0 1359.0,436.4 1361.0,435.8 1363.0,435.2 1365.0,434.6 1367.0,434.1 1369.0,433.5 1371.0,432.9 1373.0,432.5 1375.0,432.1 1377.0,431.7 1379.0,431.3 1381.0,430.9 1383.0,430.6 1385.0,430.2 1387.0,429.8 1389.0,429.4 1391.0,429.0 1393.0,428.6 1395.0,428.2 1397.0,427.8 1399.0,427.4 1401.0,427.0 1403.0,426.5 1405.0,426.0 1407.0,425.5 1409.0,425.0 1411.0,424.5 1413.0,424.0 1415.0,423.5 1417.0,422.9 1419.0,422.4 1421.0,421.9 1423.0,421.4 1425.0,420.9 1427.0,420.4 1429.0,419.9 1431.0,419.4 1433.0,419.0 1435.0,418.6 1437.0,418.1 1439.0,417.7 1441.0,417.3 1443.0,416.9 1445.0,416.5 1447.0,416.0 1449.0,415.6 1451.0,415.2 1453.0,414.8 1455.0,414.4 1457.0,413.9 1459.0,413.5 1461.0,413.1 1463.0,412.5 1465.0,411.9 1467.0,411.3 1469.0,410.7 1471.0,410.1 1473.0,409.5 1475.0,408.8 1477.0,408.2 1479.0,407.6 1481.0,407.0" fill="none" stroke="#8a1f8f" stroke-width="1.0" /><polyline points="5.0,513.8 7.0,513.5 9.0,513.1 11.0,512.8 13.0,512.5 15.0,512.2 17.0,511.8 19.0,511.5 21.0,511.2 23.0,510.8 25.0,510.5 27.0,510.2 29.0,509.9 31.0,509.5 33.0,509.2 35.0,508.9 37.0,508.4 39.0,507.8 41.0,507.2 43.0,506.7 45.0,506.1 47.0,505.6 49.0,505.0 51.0,504.5 53.0,503.9 55.0,503.4 57.0,502.8 59.0,502.2 61.0,501.7 63.0,501.1 65.0,500.6 67.0,500.0 69.0,499.5 71.0,498.9 73.0,498.2 75.0,497.5 77.0,496.8 79.0,496.1 81.0,495.4 83.0,494.7 85.0,493.9 87.0,493.2 89.0,492.5 91.0,491.8 93.0,491.1 95.0,490.4 97.0,489.7 99.0,489.0 101.0,488.4 103.0,487.7 105.0,487.1 107.0,486.4 109.0,485.8 111.0,485.1 113.0,484.5 115.0,483.9 117.0,483.2 119.0,482.6 121.0,481.9 123.0,481.3 125.0,480.6 127.0,480.0 129.0,479.5 131.0,479.1 133.0,478.6 135.0,478.2 137.0,477.7 139.0,477.3 141.0,476.8 143.0,476.4 145.0,475.9 147.0,475.5 149.0,475.0 151.0,474.5 153.0,474.1 155.0,473.6 157.0,473.2 159.0,472.7 161.0,472.3 163.0,471.8 165.0,471.3 167.0,470.9 169.0,470.4 171.0,470.0 173.0,469.5 175.0,469.1 177.0,468.6 179.0,468.1 181.0,467.7 183.0,467.2 185.0,466.6 187.0,465.9 189.0,465.1 191.0,464.4 193.0,463.6 195.0,462.9 197.0,462.1 199.0,461.4 201.0,460.6 203.0,459.9 205.0,459.1 207.0,458.4 209.0,457.6 211.0,456.9 213.0,456.1 215.0,455.4 217.0,454.7 219.0,453.9 221.0,453.2 223.0,452.5 225.0,451.7 227.0,451.0 229.0,450.3 231.0,449.5 233.0,448.8 235.0,448.1 237.0,447.3 239.0,446.6 241.0,445.9 243.0,445.1 245.0,444.4 247.0,443.6 249.0,442.9 251.0,442.1 253.0,441.4 255.0,440.6 257.0,439.9 259.0,439.5 261.0,439.5 263.0,439.5 265.0,439.5 267.0,439.5 269.0,439.5 271.0,439.5 273.0,439.5 275.0,439.5 277.0,439.5 279.0,439.5 281.0,439.5 283.0,439.5 285.0,439.5 287.0,439.6 289.0,440.1 291.0,440.6 293.0,441.1 295.0,441.6 297.0,442.1 299.0,442.6 301.0,443.1 303.0,443.6 305.0,444.1 307.0,444.6 309.0,445.1 311.0,445.6 313.0,446.1 315.0,446.6 317.0,447.6 319.0,448.6 321.0,449.6 323.0,450.6 325.0,451.6 327.0,452.6 329.0,453.6 331.0,454.7 333.0,455.7 335.0,456.7 337.0,457.7 339.0,458.7 341.0,459.7 343.0,460.7 345.0,461.9 347.0,463.1 349.0,464.3 351.0,465.4 353.0,466.6 355.0,467.8 357.0,469.0 359.0,471.4 361.0,473.7 363.0,476.1 365.0,478.4 367.0,480.8 369.0,483.2 371.0,485.5 373.0,488.6 375.0,491.8 377.0,495.0 379.0,498.2 381.0,501.4 383.0,504.6 385.0,507.8 387.0,512.2 389.0,516.9 391.0,521.7 393.0,526.2 395.0,528.6 397.0,531.0 399.0,533.4 401.0,535.9 403.0,538.3 405.0,540.3 407.0,541.1 409.0,542.0 411.0,538.1 413.0,534.1 415.0,530.2 417.0,524.7 419.0,518.6 421.0,512.4 423.0,506.3 425.0,501.3 427.0,499.1 429.0,496.8 431.0,494.6 433.0,492.3 435.0,490.0 437.0,487.8 439.0,485.5 441.0,482.8 443.0,479.6 445.0,476.1 447.0,472.3 449.0,468.5 451.0,464.7 453.0,460.9 455.0,457.1 457.0,453.3 459.0,449.5 461.0,445.7 463.0,441.4 465.0,436.8 467.0,432.2 469.0,427.6 471.0,423.0 473.0,418.4 475.0,413.7 477.0,409.1 479.0,404.5 481.0,399.9 483.0,395.3 485.0,390.4 487.0,385.2 489.0,380.0 491.0,374.8 493.0,369.6 495.0,364.4 497.0,361.8 499.0,359.3 501.0,356.7 503.0,354.2 505.0,351.6 507.0,349.1 509.0,349.4 511.0,352.5 513.0,355.7 515.0,358.8 517.0,362.0 519.0,365.0 521.0,368.0 523.0,371.0 525.0,374.0 527.0,375.5 529.0,375.5 531.0,375.5 533.0,375.5 535.0,375.5 537.0,375.5 539.0,375.5 541.0,375.3 543.0,375.0 545.0,374.7 547.0,375.4 549.0,376.1 551.0,376.8 553.0,377.5 555.0,378.2 557.0,378.9 559.0,379.6 561.0,380.3 563.0,380.8 565.0,381.3 567.0,381.8 569.0,382.3 571.0,382.8 573.0,383.3 575.0,383.8 577.0,383.8 579.0,383.8 581.0,383.8 583.0,383.8 585.0,383.8 587.0,383.8 589.0,383.8 591.0,383.5 593.0,382.8 595.0,382.1 597.0,381.4 599.0,380.7 601.0,380.1 603.0,379.4 605.0,378.7 607.0,378.0 609.0,377.4 611.0,376.7 613.0,376.0 615.0,376.1 617.0,376.3 619.0,376.4 621.0,376.5 623.0,376.7 625.0,376.8 627.0,376.9 629.0,377.7 631.0,379.2 633.0,380.6 635.0,382.1 637.0,383.5 639.0,384.9 641.0,386.4 643.0,387.8 645.0,389.3 647.0,390.7 649.0,392.2 651.0,393.6 653.0,394.8 655.0,396.0 657.0,397.2 659.0,398.5 661.0,399.7 663.0,400.9 665.0,402.1 667.0,403.3 669.0,404.5 671.0,405.7 673.0,406.9 675.0,408.2 677.0,409.4 679.0,410.6 681.0,411.8 683.0,413.0 685.0,414.2 687.0,415.4 689.0,416.5 691.0,417.7 693.0,418.9 695.0,420.1 697.0,421.3 699.0,422.7 701.0,424.1 703.0,425.5 705.0,426.9 707.0,428.3 709.0,429.6 711.0,431.0 713.0,432.4 715.0,433.8 717.0,435.1 719.0,436.5 721.0,437.9 723.0,439.3 725.0,440.6 727.0,442.0 729.0,442.0 731.0,442.0 733.0,442.0 735.0,442.0 737.0,442.0 739.0,442.0 741.0,442.0 743.0,442.0 745.0,442.0 747.0,441.9 749.0,441.7 751.0,441.6 753.0,441.4 755.0,441.3 757.0,441.2 759.0,441.0 761.0,440.9 763.0,440.7 765.0,441.5 767.0,442.8 769.0,444.0 771.0,445.2 773.0,446.4 775.0,448.4 777.0,451.3 779.0,454.1 781.0,457.0 783.0,459.8 785.0,462.7 787.0,465.5 789.0,468.3 791.0,471.2 793.0,474.0 795.0,476.9 797.0,479.7 799.0,482.6 801.0,484.8 803.0,486.5 805.0,488.2 807.0,489.9 809.0,491.6 811.0,493.2 813.0,494.9 815.0,496.6 817.0,498.3 819.0,499.9 821.0,501.3 823.0,502.7 825.0,504.1 827.0,505.5 829.0,506.9 831.0,508.3 833.0,509.7 835.0,511.0 837.0,512.4 839.0,513.8 841.0,515.2 843.0,516.6 845.0,518.0 847.0,520.2 849.0,522.5 851.0,524.7 853.0,526.9 855.0,529.2 857.0,531.4 859.0,533.6 861.0,535.8 863.0,538.1 865.0,540.3 867.0,542.5 869.0,544.8 871.0,547.0 873.0,546.7 875.0,546.4 877.0,546.1 879.0,545.9 881.0,545.6 883.0,545.3 885.0,545.0 887.0,544.7 889.0,544.4 891.0,544.1 893.0,544.4 895.0,545.3 897.0,546.2 899.0,547.0 901.0,547.9 903.0,548.7 905.0,549.6 907.0,550.5 909.0,551.3 911.0,552.3 913.0,553.7 915.0,555.1 917.0,556.5 919.0,557.9 921.0,559.3 923.0,560.8 925.0,562.2 927.0,563.6 929.0,565.0 931.0,565.5 933.0,566.1 935.0,566.6 937.0,567.2 939.0,567.7 941.0,568.4 943.0,569.1 945.0,569.9 947.0,570.6 949.0,571.4 951.0,572.2 953.0,572.9 955.0,573.7 957.0,574.4 959.0,575.2 961.0,575.9 963.0,576.7 965.0,576.6 967.0,576.4 969.0,576.3 971.0,576.2 973.0,576.0 975.0,575.9 977.0,575.8 979.0,575.7 981.0,575.5 983.0,575.4 985.0,575.3 987.0,575.1 989.0,575.0 991.0,573.6 993.0,572.2 995.0,570.8 997.0,569.5 999.0,568.1 1001.0,566.7 1003.0,565.2 1005.0,563.6 1007.0,562.0 1009.0,560.5 1011.0,558.9 1013.0,557.3 1015.0,555.7 1017.0,554.9 1019.0,554.2 1021.0,553.4 1023.0,553.1 1025.0,553.2 1027.0,553.3 1029.0,553.4 1031.0,553.5 1033.0,553.6 1035.0,553.7 1037.0,553.8 1039.0,553.9 1041.0,554.0 1043.0,554.1 1045.0,554.2 1047.0,554.3 1049.0,554.4 1051.0,554.5 1053.0,554.6 1055.0,554.7 1057.0,554.8 1059.0,554.9 1061.0,555.0 1063.0,555.1 1065.0,555.2 1067.0,555.3 1069.0,555.4 1071.0,555.5 1073.0,555.6 1075.0,555.7 1077.0,555.6 1079.0,555.5 1081.0,555.4 1083.0,555.3 1085.0,555.2 1087.0,555.1 1089.0,555.0 1091.0,554.9 1093.0,554.8 1095.0,554.7 1097.0,554.6 1099.0,554.5 1101.0,554.4 1103.0,554.3 1105.0,554.2 1107.0,554.1 1109.0,554.0 1111.0,553.9 1113.0,553.8 1115.0,553.5 1117.0,553.1 1119.0,552.7 1121.0,552.3 1123.0,551.8 1125.0,551.4 1127.0,551.0 1129.0,550.6 1131.0,549.8 1133.0,548.7 1135.0,547.6 1137.0,546.5 1139.0,545.4 1141.0,544.3 1143.0,543.2 1145.0,542.1 1147.0,541.0 1149.0,539.9 1151.0,538.8 1153.0,537.7 1155.0,536.6 1157.0,535.1 1159.0,533.4 1161.0,531.6 1163.0,529.8 1165.0,528.1 1167.0,526.3 1169.0,524.5 1171.0,522.8 1173.0,521.0 1175.0,519.2 1177.0,517.5 1179.0,515.7 1181.0,513.9 1183.0,512.2 1185.0,510.4 1187.0,508.6 1189.0,506.9 1191.0,505.1 1193.0,503.3 1195.0,501.4 1197.0,499.5 1199.0,497.6 1201.0,495.7 1203.0,493.8 1205.0,491.9 1207.0,490.0 1209.0,488.1 1211.0,486.2 1213.0,484.3 1215.0,482.3 1217.0,480.4 1219.0,478.5 1221.0,476.6 1223.0,474.7 1225.0,472.8 1227.0,470.9 1229.0,469.0 1231.0,467.0 1233.0,465.0 1235.0,463.0 1237.0,461.0 1239.0,459.1 1241.0,457.1 1243.0,455.1 1245.0,453.1 1247.0,451.1 1249.0,449.1 1251.0,447.1 1253.0,445.1 1255.0,443.1 1257.0,441.2 1259.0,439.2 1261.0,437.2 1263.0,435.2 1265.0,433.2 1267.0,432.1 1269.0,431.3 1271.0,430.6 1273.0,429.8 1275.0,429.0 1277.0,428.2 1279.0,427.5 1281.0,426.7 1283.0,425.9 1285.0,425.1 1287.0,424.4 1289.0,423.6 1291.0,423.6 1293.0,423.6 1295.0,423.6 1297.0,423.6 1299.0,423.6 1301.0,423.6 1303.0,423.6 1305.0,423.6 1307.0,423.6 1309.0,423.6 1311.0,423.6 1313.0,423.6 1315.0,423.6 1317.0,423.6 1319.0,423.6 1321.0,424.1 1323.0,425.0 1325.0,426.0 1327.0,426.9 1329.0,427.8 1331.0,428.8 1333.0,429.7 1335.0,430.6 1337.0,431.6 1339.0,432.5 1341.0,433.3 1343.0,433.9 1345.0,434.5 1347.0,435.1 1349.0,435.6 1351.0,436.2 1353.0,436.8 1355.0,437.4 1357.0,438.0 1359.0,438.6 1361.0,439.2 1363.0,439.8 1365.0,440.4 1367.0,440.9 1369.0,441.5 1371.0,442.0 1373.0,442.0 1375.0,442.0 1377.0,442.0 1379.0,442.0 1381.0,442.0 1383.0,442.0 1385.0,442.0 1387.0,442.0 1389.0,441.9 1391.0,440.8 1393.0,439.8 1395.0,438.7 1397.0,437.6 1399.0,436.6 1401.0,435.5 1403.0,434.4 1405.0,433.4 1407.0,432.3 1409.0,431.1 1411.0,429.3 1413.0,427.5 1415.0,425.7 1417.0,423.9 1419.0,422.1 1421.0,420.3 1423.0,418.5 1425.0,417.2 1427.0,415.9 1429.0,414.7 1431.0,413.5 1433.0,412.3 1435.0,411.1 1437.0,409.9 1439.0,408.6 1441.0,406.7 1443.0,404.9 1445.0,403.0 1447.0,401.1 1449.0,399.3 1451.0,397.4 1453.0,395.5 1455.0,393.7 1457.0,391.8 1459.0,389.9 1461.0,388.1 1463.0,386.5 1465.0,385.0 1467.0,383.5 1469.0,382.0 1471.0,380.5 1473.0,379.0 1475.0,377.5 1477.0,376.0 1479.0,374.5 1481.0,373.0" fill="none" stroke="#e81ee8" stroke-width="1.2" /><path d="M5.5 501.2V508.4 M7.5 500.7V508.1 M9.5 501.4V508.2 M11.5 500.9V508.6 M13.5 502.1V507.9 M15.5 501.7V507.8 M17.5 498.9V506.8 M19.5 498.6V505.1 M21.5 498.4V504.7 M23.5 496.8V505.3 M25.5 496.7V504.5 M27.5 495.6V503.7 M29.5 493.4V502.5 M31.5 495.3V501.8 M33.5 489.7V500.3 M35.5 489.2V496.4 M37.5 488.5V497.3 M39.5 488.6V495.8 M41.5 488.5V494.4 M43.5 489.0V494.4 M45.5 486.1V494.0 M47.5 487.6V493.5 M49.5 489.5V501.8 M51.5 491.5V507.4 M53.5 497.3V508.7 M55.5 500.8V509.5 M57.5 494.6V505.9 M59.5 486.9V502.3 M61.5 478.8V493.8 M63.5 470.7V480.5 M65.5 473.0V483.1 M67.5 477.5V484.7 M69.5 476.3V484.7 M71.5 475.1V485.9 M73.5 474.7V486.5 M75.5 466.7V481.1 M77.5 461.5V472.3 M79.5 461.2V468.0 M81.5 460.8V467.4 M83.5 460.5V466.7 M85.5 459.9V465.1 M87.5 459.4V465.8 M89.5 458.8V472.5 M91.5 462.1V474.0 M93.5 466.3V476.7 M95.5 471.5V479.3 M97.5 472.7V480.1 M99.5 473.9V484.7 M101.5 478.0V487.1 M103.5 480.2V488.3 M105.5 481.7V489.5 M107.5 484.1V489.9 M109.5 481.2V489.4 M111.5 480.9V486.9 M113.5 479.8V486.1 M115.5 478.5V485.6 M117.5 471.8V482.5 M119.5 467.4V478.9 M121.5 467.7V475.8 M123.5 462.8V472.6 M125.5 460.6V469.5 M127.5 461.4V470.7 M129.5 465.3V471.9 M131.5 466.9V475.8 M133.5 471.5V481.2 M135.5 474.5V489.0 M137.5 481.0V495.5 M139.5 478.9V490.3 M141.5 473.1V485.1 M143.5 473.4V481.3 M145.5 470.1V479.0 M147.5 468.2V476.1 M149.5 466.5V474.5 M151.5 463.8V472.2 M153.5 463.2V470.0 M155.5 457.5V468.5 M157.5 453.9V463.7 M159.5 454.0V463.6 M161.5 450.5V462.9 M163.5 449.7V457.7 M165.5 443.5V452.5 M167.5 445.5V451.2 M169.5 447.5V452.1 M171.5 447.5V456.1 M173.5 449.4V455.3 M175.5 445.9V454.5 M177.5 444.5V457.4 M179.5 448.3V458.0 M181.5 445.5V458.3 M183.5 444.5V454.5 M185.5 444.6V452.5 M187.5 443.3V448.1 M189.5 435.5V443.7 M191.5 428.8V440.9 M193.5 428.1V439.3 M195.5 427.5V438.5 M197.5 427.5V436.9 M199.5 427.5V440.9 M201.5 432.5V441.5 M203.5 427.2V441.5 M205.5 424.6V439.1 M207.5 425.4V439.9 M209.5 423.1V438.3 M211.5 415.2V432.2 M213.5 410.5V421.5 M215.5 411.7V423.9 M217.5 412.9V426.2 M219.5 416.3V426.1 M221.5 414.6V426.8 M223.5 418.1V431.9 M225.5 424.4V439.3 M227.5 432.8V458.0 M229.5 443.2V464.1 M231.5 451.2V467.6 M233.5 450.8V467.8 M235.5 445.5V458.9 M237.5 434.4V451.5 M239.5 433.0V447.6 M241.5 427.3V449.5 M243.5 428.5V446.5 M245.5 430.5V440.0 M247.5 430.5V443.2 M249.5 434.7V445.5 M251.5 433.0V445.5 M253.5 430.6V447.0 M255.5 429.1V437.5 M257.5 426.1V437.5 M259.5 426.5V437.5 M261.5 419.5V437.5 M263.5 427.0V434.2 M265.5 434.5V447.2 M267.5 436.3V449.3 M269.5 438.1V452.3 M271.5 442.7V455.7 M273.5 444.3V460.2 M275.5 445.3V458.6 M277.5 444.7V461.0 M279.5 444.6V459.0 M281.5 445.7V461.9 M283.5 449.2V461.1 M285.5 450.5V460.0 M287.5 452.8V459.2 M289.5 459.3V468.6 M291.5 465.9V472.5 M293.5 466.3V475.1 M295.5 462.8V474.4 M297.5 459.1V472.0 M299.5 452.3V465.2 M301.5 448.5V459.3 M303.5 448.5V453.7 M305.5 448.5V454.3 M307.5 448.1V457.0 M309.5 445.7V457.0 M311.5 449.1V458.9 M313.5 448.1V459.9 M315.5 451.4V460.9 M317.5 457.8V466.8 M319.5 461.2V476.8 M321.5 469.5V481.8 M323.5 471.7V481.8 M325.5 471.1V479.7 M327.5 472.2V486.1 M329.5 480.7V488.4 M331.5 492.5V504.3 M333.5 494.9V510.4 M335.5 497.7V515.0 M337.5 502.4V524.0 M339.5 508.5V522.2 M341.5 515.8V532.0 M343.5 513.1V537.1 M345.5 485.2V539.4 M347.5 476.0V517.1 M349.5 480.0V522.8 M351.5 496.0V520.5 M353.5 484.7V520.5 M355.5 493.9V536.5 M357.5 513.4V534.2 M359.5 514.8V534.7 M361.5 523.5V550.9 M363.5 534.1V562.6 M365.5 544.4V573.7 M367.5 554.2V582.4 M369.5 565.9V585.1 M371.5 577.5V594.7 M373.5 588.2V625.8 M375.5 598.8V622.4 M377.5 601.5V642.3 M379.5 608.5V637.8 M381.5 601.5V627.5 M383.5 606.4V618.4 M385.5 611.3V623.7 M387.5 617.4V628.4 M389.5 623.9V636.1 M391.5 625.2V647.0 M393.5 634.6V649.5 M395.5 637.5V654.4 M397.5 630.0V660.0 M399.5 618.0V644.0 M401.5 607.0V648.0 M403.5 480.0V640.0 M405.5 455.0V530.0 M407.5 448.6V489.1 M409.5 430.9V469.1 M411.5 227.8V368.0 M413.5 205.1V264.5 M415.5 171.5V244.5 M417.5 63.5V215.5 M419.5 118.7V166.0 M421.5 98.5V172.3 M423.5 167.5V233.0 M425.5 196.3V263.0 M427.5 239.5V366.7 M429.5 355.6V434.2 M431.5 363.6V423.5 M433.5 324.8V412.4 M435.5 327.3V407.0 M437.5 374.6V402.5 M439.5 371.5V402.5 M441.5 381.8V407.7 M443.5 389.6V409.7 M445.5 369.2V413.5 M447.5 360.3V405.0 M449.5 369.6V387.9 M451.5 356.1V380.5 M453.5 354.3V371.7 M455.5 327.5V350.2 M457.5 318.5V339.1 M459.5 318.3V340.3 M461.5 307.7V338.4 M463.5 299.0V331.9 M465.5 307.8V334.1 M467.5 315.1V335.2 M469.5 315.8V333.5 M471.5 311.9V338.5 M473.5 318.6V349.8 M475.5 327.0V369.9 M477.5 354.6V373.5 M479.5 358.7V378.6 M481.5 361.8V378.8 M483.5 365.3V387.7 M485.5 375.6V386.5 M487.5 375.6V385.2 M489.5 372.4V386.0 M491.5 373.3V385.4 M493.5 375.4V392.5 M495.5 383.2V403.0 M497.5 387.7V408.2 M499.5 391.4V418.2 M501.5 398.6V422.9 M503.5 405.6V424.2 M505.5 410.5V430.3 M507.5 416.1V440.2 M509.5 422.4V436.5 M511.5 409.9V428.0 M513.5 400.4V422.0 M515.5 397.5V416.0 M517.5 396.4V411.0 M519.5 387.7V406.0 M521.5 382.7V401.0 M523.5 381.1V393.9 M525.5 373.3V390.2 M527.5 365.1V383.8 M529.5 365.8V376.1 M531.5 366.3V377.7 M533.5 366.3V379.7 M535.5 368.9V381.3 M537.5 370.5V379.9 M539.5 367.9V380.1 M541.5 364.2V376.7 M543.5 363.4V373.8 M545.5 360.4V374.3 M547.5 357.9V369.8 M549.5 358.8V365.2 M551.5 360.3V368.3 M553.5 363.4V374.9 M555.5 366.6V381.3 M557.5 370.1V381.2 M559.5 372.1V379.7 M561.5 374.2V379.0 M563.5 374.2V381.1 M565.5 374.3V382.1 M567.5 374.5V383.9 M569.5 375.4V384.3 M571.5 376.3V387.7 M573.5 365.9V382.2 M575.5 361.3V376.8 M577.5 359.3V372.4 M579.5 359.8V374.0 M581.5 364.6V379.6 M583.5 369.7V379.5 M585.5 369.6V378.2 M587.5 368.9V378.6 M589.5 373.5V383.3 M591.5 374.4V384.2 M593.5 374.8V383.2 M595.5 374.6V382.7 M597.5 375.7V383.1 M599.5 376.6V383.0 M601.5 372.0V382.0 M603.5 371.6V380.1 M605.5 369.1V378.1 M607.5 368.9V375.3 M609.5 370.9V376.2 M611.5 372.6V378.6 M613.5 373.9V381.6 M615.5 375.4V385.8 M617.5 378.2V385.6 M619.5 381.0V391.2 M621.5 382.2V403.9 M623.5 386.7V406.8 M625.5 392.3V398.1 M627.5 396.5V410.7 M629.5 400.6V414.4 M631.5 405.7V418.2 M633.5 411.5V430.6 M635.5 419.2V439.0 M637.5 431.5V441.2 M639.5 432.4V445.9 M641.5 433.2V444.4 M643.5 427.9V443.0 M645.5 424.8V438.6 M647.5 423.8V439.7 M649.5 424.4V440.3 M651.5 425.0V442.3 M653.5 429.6V446.2 M655.5 434.5V450.5 M657.5 442.8V460.0 M659.5 443.4V462.8 M661.5 431.6V458.0 M663.5 428.8V448.4 M665.5 423.8V437.2 M667.5 414.0V431.1 M669.5 417.2V427.1 M671.5 420.0V425.7 M673.5 423.6V437.7 M675.5 429.4V442.5 M677.5 430.6V442.5 M679.5 429.7V442.2 M681.5 423.9V441.3 M683.5 426.6V437.0 M685.5 430.5V442.4 M687.5 433.8V446.0 M689.5 436.7V452.7 M691.5 441.5V454.9 M693.5 443.5V452.3 M695.5 447.5V455.1 M697.5 449.6V456.6 M699.5 451.7V459.7 M701.5 450.3V461.5 M703.5 447.8V460.4 M705.5 446.5V462.6 M707.5 445.6V464.6 M709.5 452.4V463.6 M711.5 452.3V462.2 M713.5 448.8V461.2 M715.5 447.1V459.2 M717.5 449.6V459.3 M719.5 452.9V459.3 M721.5 453.9V459.3 M723.5 450.7V458.0 M725.5 449.2V455.5 M727.5 446.9V453.0 M729.5 445.2V451.5 M731.5 444.4V450.0 M733.5 437.0V448.3 M735.5 431.3V444.3 M737.5 431.2V440.3 M739.5 425.6V436.4 M741.5 425.1V432.6 M743.5 421.8V429.8 M745.5 421.5V431.0 M747.5 421.0V432.3 M749.5 417.2V433.6 M751.5 419.3V434.7 M753.5 425.1V435.4 M755.5 425.4V436.2 M757.5 429.5V437.0 M759.5 429.2V439.6 M761.5 429.5V442.4 M763.5 432.6V445.9 M765.5 441.1V452.3 M767.5 450.5V471.2 M769.5 458.5V483.1 M771.5 475.7V524.8 M773.5 503.9V532.0 M775.5 548.2V560.8 M777.5 562.2V574.1 M779.5 568.8V595.4 M781.5 573.3V597.4 M783.5 577.4V603.5 M785.5 588.9V601.4 M787.5 587.0V600.0 M789.5 581.9V607.8 M791.5 577.3V613.3 M793.5 571.1V599.9 M795.5 557.0V584.2 M797.5 552.2V573.6 M799.5 546.5V564.3 M801.5 540.0V556.8 M803.5 533.5V552.6 M805.5 532.0V545.9 M807.5 530.5V545.8 M809.5 537.0V556.0 M811.5 543.5V563.2 M813.5 549.4V561.1 M815.5 544.0V559.0 M817.5 531.4V553.4 M819.5 527.5V544.1 M821.5 518.8V535.5 M823.5 506.3V527.5 M825.5 506.3V522.2 M827.5 505.1V519.8 M829.5 502.8V519.0 M831.5 507.0V518.2 M833.5 507.9V519.2 M835.5 504.7V518.4 M837.5 502.1V515.2 M839.5 505.9V520.8 M841.5 510.3V523.2 M843.5 512.9V522.8 M845.5 513.8V525.1 M847.5 514.7V528.8 M849.5 518.9V532.5 M851.5 524.9V537.3 M853.5 528.3V542.2 M855.5 526.9V550.5 M857.5 532.0V552.6 M859.5 537.8V557.0 M861.5 544.1V560.4 M863.5 548.3V565.1 M865.5 552.4V576.0 M867.5 560.0V577.9 M869.5 552.7V574.4 M871.5 551.5V568.4 M873.5 553.5V567.4 M875.5 555.5V566.2 M877.5 557.1V570.2 M879.5 555.8V570.9 M881.5 554.8V563.4 M883.5 555.1V565.4 M885.5 556.1V569.5 M887.5 557.0V568.9 M889.5 557.0V572.5 M891.5 557.0V578.7 M893.5 562.7V582.4 M895.5 574.2V594.2 M897.5 585.6V596.9 M899.5 589.5V605.6 M901.5 594.3V607.7 M903.5 596.5V616.5 M905.5 603.2V627.1 M907.5 610.3V623.0 M909.5 598.6V616.5 M911.5 589.9V605.9 M913.5 580.7V594.5 M915.5 579.2V597.2 M917.5 576.7V600.0 M919.5 571.3V626.2 M921.5 573.3V641.9 M923.5 580.4V624.2 M925.5 585.0V602.5 M927.5 568.7V585.5 M929.5 550.7V568.5 M931.5 551.7V569.0 M933.5 540.3V572.6 M935.5 538.4V574.4 M937.5 542.0V567.1 M939.5 542.2V558.4 M941.5 546.0V560.1 M943.5 556.5V571.0 M945.5 555.0V569.6 M947.5 553.5V564.4 M949.5 547.8V567.2 M951.5 542.0V565.7 M953.5 560.1V580.8 M955.5 562.5V586.1 M957.5 567.0V585.3 M959.5 571.7V594.6 M961.5 569.4V594.7 M963.5 559.6V585.8 M965.5 551.6V572.4 M967.5 547.7V565.4 M969.5 549.2V582.2 M971.5 554.1V576.9 M973.5 554.3V571.5 M975.5 549.7V570.6 M977.5 550.3V570.6 M979.5 553.8V570.5 M981.5 556.5V572.7 M983.5 560.8V571.9 M985.5 565.3V571.9 M987.5 561.1V571.9 M989.5 553.5V564.7 M991.5 541.8V552.7 M993.5 539.8V547.5 M995.5 534.4V546.0 M997.5 528.6V540.3 M999.5 519.3V534.8 M1001.5 512.4V530.4 M1003.5 507.5V530.7 M1005.5 510.7V528.7 M1007.5 513.6V523.8 M1009.5 514.9V524.7 M1011.5 515.4V524.8 M1013.5 514.0V528.3 M1015.5 517.8V527.7 M1017.5 513.2V544.0 M1019.5 529.2V559.6 M1021.5 542.5V561.3 M1023.5 558.6V570.6 M1025.5 560.8V570.9 M1027.5 563.0V576.6 M1029.5 558.2V576.4 M1031.5 553.5V575.5 M1033.5 554.0V572.5 M1035.5 552.5V566.2 M1037.5 554.4V568.4 M1039.5 557.4V569.5 M1041.5 558.8V573.1 M1043.5 564.2V576.6 M1045.5 568.1V580.1 M1047.5 569.6V581.7 M1049.5 572.8V582.7 M1051.5 571.6V583.4 M1053.5 570.6V582.5 M1055.5 568.8V581.6 M1057.5 568.2V583.6 M1059.5 572.3V588.5 M1061.5 571.6V592.6 M1063.5 572.3V589.2 M1065.5 577.4V588.0 M1067.5 567.5V583.0 M1069.5 563.4V576.2 M1071.5 564.0V574.0 M1073.5 568.5V580.9 M1075.5 572.3V581.9 M1077.5 571.1V577.2 M1079.5 556.2V567.4 M1081.5 546.5V556.7 M1083.5 537.2V545.5 M1085.5 530.5V544.0 M1087.5 531.5V541.3 M1089.5 527.9V536.4 M1091.5 521.9V532.8 M1093.5 520.6V527.4 M1095.5 519.8V527.5 M1097.5 520.2V528.0 M1099.5 519.3V527.9 M1101.5 518.5V525.0 M1103.5 520.5V527.4 M1105.5 524.3V529.7 M1107.5 527.0V532.6 M1109.5 528.5V536.6 M1111.5 530.0V538.9 M1113.5 529.4V537.1 M1115.5 526.9V535.4 M1117.5 526.3V532.7 M1119.5 526.3V530.7 M1121.5 527.9V534.6 M1123.5 527.8V539.9 M1125.5 528.6V543.3 M1127.5 534.0V542.1 M1129.5 531.7V539.5 M1131.5 531.1V536.9 M1133.5 526.5V534.6 M1135.5 525.2V532.2 M1137.5 522.8V529.9 M1139.5 521.8V529.5 M1141.5 522.1V529.5 M1143.5 522.9V529.3 M1145.5 522.1V527.6 M1147.5 517.9V525.0 M1149.5 514.0V522.1 M1151.5 513.3V519.2 M1153.5 513.0V518.2 M1155.5 512.6V516.7 M1157.5 510.5V515.8 M1159.5 505.9V515.0 M1161.5 488.8V507.2 M1163.5 477.9V494.4 M1165.5 465.7V480.0 M1167.5 460.5V470.9 M1169.5 453.9V467.0 M1171.5 454.0V464.1 M1173.5 452.5V460.9 M1175.5 449.4V458.5 M1177.5 449.4V456.8 M1179.5 450.5V457.3 M1181.5 450.5V456.9 M1183.5 449.9V457.0 M1185.5 445.9V453.8 M1187.5 443.7V450.5 M1189.5 445.8V452.4 M1191.5 448.4V457.5 M1193.5 451.6V459.9 M1195.5 454.5V462.1 M1197.5 446.1V461.5 M1199.5 439.9V457.2 M1201.5 437.0V450.5 M1203.5 433.1V445.3 M1205.5 430.3V443.0 M1207.5 426.1V438.8 M1209.5 426.6V435.2 M1211.5 424.4V431.7 M1213.5 420.2V428.7 M1215.5 417.7V429.5 M1217.5 419.7V432.4 M1219.5 423.1V431.9 M1221.5 418.0V430.2 M1223.5 417.9V423.4 M1225.5 421.2V427.2 M1227.5 424.5V431.7 M1229.5 425.5V432.9 M1231.5 426.1V436.0 M1233.5 426.6V439.6 M1235.5 428.3V438.1 M1237.5 425.9V432.0 M1239.5 416.4V426.0 M1241.5 393.1V414.4 M1243.5 397.8V407.2 M1245.5 402.1V414.7 M1247.5 410.9V421.0 M1249.5 411.7V424.3 M1251.5 415.9V422.2 M1253.5 414.2V420.3 M1255.5 415.0V418.9 M1257.5 409.3V417.6 M1259.5 411.0V416.6 M1261.5 407.2V416.1 M1263.5 403.6V415.2 M1265.5 401.7V412.4 M1267.5 401.8V412.0 M1269.5 402.4V409.2 M1271.5 403.1V409.7 M1273.5 403.9V413.9 M1275.5 408.2V416.3 M1277.5 408.3V416.9 M1279.5 408.7V416.9 M1281.5 405.2V416.9 M1283.5 409.0V418.1 M1285.5 412.4V420.1 M1287.5 416.5V425.4 M1289.5 419.8V432.0 M1291.5 425.6V434.5 M1293.5 427.1V440.6 M1295.5 432.8V442.1 M1297.5 434.6V442.2 M1299.5 436.6V442.3 M1301.5 438.5V446.3 M1303.5 440.6V447.6 M1305.5 442.2V448.5 M1307.5 442.6V449.0 M1309.5 443.1V447.2 M1311.5 439.4V447.8 M1313.5 437.5V446.7 M1315.5 436.2V445.4 M1317.5 436.8V445.8 M1319.5 439.4V447.1 M1321.5 442.2V450.8 M1323.5 445.7V455.7 M1325.5 449.2V455.8 M1327.5 453.1V461.9 M1329.5 456.9V468.8 M1331.5 461.9V471.5 M1333.5 464.5V470.0 M1335.5 450.1V460.2 M1337.5 447.2V457.7 M1339.5 448.2V460.6 M1341.5 450.8V464.4 M1343.5 453.1V467.5 M1345.5 451.3V462.3 M1347.5 449.6V461.5 M1349.5 447.6V462.7 M1351.5 448.5V463.3 M1353.5 449.4V462.3 M1355.5 445.9V457.5 M1357.5 441.6V455.2 M1359.5 442.8V451.4 M1361.5 443.4V450.0 M1363.5 436.0V445.0 M1365.5 422.8V437.6 M1367.5 406.1V427.9 M1369.5 406.4V419.4 M1371.5 412.0V422.5 M1373.5 415.4V424.5 M1375.5 418.9V443.3 M1377.5 423.1V435.6 M1379.5 420.9V431.3 M1381.5 420.7V433.3 M1383.5 418.3V434.2 M1385.5 421.6V431.9 M1387.5 419.6V433.0 M1389.5 407.9V417.9 M1391.5 378.6V396.9 M1393.5 373.6V382.2 M1395.5 374.3V382.9 M1397.5 370.0V381.7 M1399.5 364.4V375.8 M1401.5 353.5V369.9 M1403.5 353.4V364.7 M1405.5 351.0V366.1 M1407.5 349.2V364.4 M1409.5 352.7V370.5 M1411.5 364.5V384.5 M1413.5 367.5V384.3 M1415.5 363.6V379.3 M1417.5 361.4V373.7 M1419.5 358.7V369.9 M1421.5 362.8V377.0 M1423.5 371.7V380.8 M1425.5 369.7V381.5 M1427.5 370.7V377.9 M1429.5 372.1V377.0 M1431.5 373.5V381.3 M1433.5 379.2V389.5 M1435.5 384.8V390.3 M1437.5 384.7V389.4 M1439.5 382.2V390.9 M1441.5 376.9V389.0 M1443.5 374.1V388.4 M1445.5 377.9V388.9 M1447.5 375.5V387.1 M1449.5 375.5V381.9 M1451.5 364.3V376.0 M1453.5 362.3V372.1 M1455.5 360.3V368.0 M1457.5 360.8V369.7 M1459.5 362.1V381.0 M1461.5 362.9V377.4 M1463.5 357.5V365.9 M1465.5 351.8V359.2 M1467.5 348.0V358.3 M1469.5 346.2V358.6 M1471.5 344.9V353.2 M1473.5 343.5V353.6 M1475.5 342.1V352.3 M1477.5 341.4V352.6 M1479.5 341.6V355.1 M1481.5 344.5V353.8" stroke="#000" stroke-width="1" shape-rendering="crispEdges"/><path d="M1475 357.5 h3 v-3.5 l5.5 6 l-5.5 6 v-3.5 h-3z" fill="#ff1a1a" stroke="#fff" stroke-width="1"/></g><g clip-path="url(#cr)"><polyline points="7.0,774.0 9.0,774.0 11.0,774.0 13.0,765.8 15.0,760.5 17.0,739.8 19.0,740.8 21.0,736.7 23.0,738.9 25.0,738.7 27.0,728.2 29.0,729.8 31.0,724.8 33.0,713.1 35.0,711.2 37.0,726.5 39.0,720.4 41.0,718.9 43.0,720.9 45.0,716.5 47.0,721.0 49.0,741.4 51.0,750.0 53.0,754.7 55.0,754.2 57.0,742.5 59.0,731.3 61.0,719.4 63.0,714.0 65.0,719.8 67.0,722.5 69.0,720.4 71.0,724.0 73.0,723.7 75.0,715.1 77.0,712.6 79.0,712.5 81.0,714.2 83.0,712.7 85.0,714.5 87.0,713.3 89.0,728.2 91.0,727.1 93.0,738.5 95.0,741.1 97.0,743.6 99.0,747.8 101.0,751.7 103.0,751.5 105.0,753.6 107.0,753.2 109.0,747.8 111.0,743.0 113.0,741.9 115.0,737.3 117.0,728.1 119.0,721.4 121.0,723.0 123.0,715.6 125.0,714.5 127.0,725.9 129.0,728.5 131.0,735.4 133.0,740.8 135.0,751.8 137.0,755.4 139.0,743.4 141.0,735.7 143.0,734.7 145.0,728.8 147.0,727.1 149.0,725.1 151.0,722.2 153.0,722.0 155.0,715.5 157.0,715.1 159.0,716.4 161.0,713.5 163.0,711.9 165.0,708.3 167.0,709.8 169.0,713.6 171.0,725.9 173.0,724.3 175.0,719.3 177.0,728.2 179.0,731.6 181.0,725.6 183.0,723.5 185.0,729.9 187.0,724.2 189.0,716.8 191.0,712.1 193.0,720.0 195.0,717.2 197.0,719.1 199.0,730.9 201.0,728.9 203.0,723.1 205.0,724.0 207.0,733.3 209.0,725.8 211.0,718.0 213.0,715.4 215.0,721.3 217.0,725.7 219.0,725.7 221.0,725.5 223.0,732.2 225.0,741.6 227.0,753.9 229.0,756.2 231.0,757.0 233.0,747.9 235.0,744.0 237.0,734.8 239.0,734.9 241.0,734.0 243.0,728.6 245.0,729.9 247.0,734.5 249.0,740.8 251.0,733.8 253.0,738.7 255.0,730.2 257.0,729.5 259.0,728.2 261.0,721.3 263.0,728.3 265.0,740.8 267.0,743.3 269.0,746.3 271.0,748.5 273.0,750.0 275.0,744.4 277.0,750.2 279.0,740.9 281.0,745.9 283.0,743.5 285.0,740.8 287.0,744.2 289.0,750.5 291.0,752.7 293.0,753.0 295.0,750.3 297.0,747.8 299.0,735.7 301.0,727.4 303.0,728.9 305.0,730.7 307.0,731.5 309.0,733.3 311.0,735.3 313.0,731.6 315.0,738.6 317.0,746.9 319.0,756.8 321.0,758.4 323.0,754.4 325.0,750.4 327.0,755.1 329.0,756.5 331.0,761.8 333.0,764.3 335.0,765.3 337.0,766.8 339.0,766.9 341.0,768.2 343.0,768.9 345.0,731.7 347.0,736.9 349.0,745.5 351.0,740.5 353.0,733.4 355.0,743.7 357.0,743.9 359.0,744.6 361.0,750.6 363.0,753.5 365.0,756.2 367.0,753.9 369.0,756.6 371.0,758.5 373.0,762.7 375.0,762.9 377.0,765.3 379.0,759.1 381.0,750.1 383.0,751.2 385.0,751.9 387.0,754.4 389.0,756.2 391.0,759.3 393.0,760.3 395.0,758.9 397.0,757.9 399.0,744.8 401.0,742.0 403.0,716.8 405.0,709.0 407.0,706.6 409.0,705.6 411.0,701.1 413.0,700.7 415.0,700.3 417.0,699.5 419.0,708.9 421.0,707.8 423.0,723.9 425.0,727.5 427.0,736.1 429.0,743.1 431.0,741.6 433.0,737.5 435.0,741.6 437.0,740.8 439.0,741.5 441.0,741.2 443.0,741.9 445.0,739.5 447.0,738.6 449.0,738.2 451.0,734.3 453.0,733.0 455.0,727.4 457.0,726.1 459.0,729.1 461.0,724.8 463.0,723.4 465.0,728.4 467.0,728.5 469.0,728.4 471.0,731.3 473.0,733.9 475.0,743.4 477.0,745.8 479.0,746.6 481.0,747.9 483.0,751.1 485.0,751.7 487.0,750.2 489.0,745.3 491.0,747.8 493.0,752.2 495.0,755.4 497.0,755.7 499.0,758.4 501.0,760.6 503.0,756.6 505.0,759.6 507.0,762.2 509.0,756.9 511.0,744.2 513.0,735.3 515.0,738.4 517.0,734.4 519.0,730.0 521.0,726.1 523.0,725.7 525.0,722.4 527.0,718.2 529.0,718.8 531.0,718.4 533.0,724.0 535.0,724.5 537.0,724.9 539.0,722.3 541.0,718.8 543.0,721.1 545.0,718.1 547.0,715.2 549.0,715.0 551.0,719.9 553.0,732.1 555.0,740.6 557.0,737.6 559.0,740.9 561.0,740.7 563.0,743.2 565.0,741.1 567.0,744.5 569.0,741.1 571.0,749.5 573.0,729.0 575.0,725.0 577.0,722.5 579.0,727.8 581.0,737.7 583.0,740.9 585.0,735.9 587.0,734.4 589.0,742.4 591.0,738.2 593.0,741.4 595.0,740.9 597.0,741.1 599.0,740.6 601.0,734.6 603.0,734.0 605.0,728.2 607.0,725.7 609.0,731.9 611.0,737.5 613.0,743.0 615.0,746.9 617.0,747.4 619.0,753.2 621.0,762.9 623.0,744.9 625.0,747.4 627.0,753.9 629.0,755.9 631.0,756.4 633.0,760.5 635.0,762.4 637.0,764.2 639.0,765.5 641.0,762.2 643.0,752.8 645.0,748.6 647.0,751.3 649.0,742.5 651.0,748.3 653.0,751.2 655.0,754.3 657.0,758.4 659.0,751.4 661.0,741.1 663.0,737.9 665.0,732.6 667.0,726.9 669.0,730.3 671.0,729.6 673.0,738.7 675.0,740.5 677.0,738.4 679.0,742.0 681.0,731.3 683.0,733.4 685.0,739.4 687.0,743.3 689.0,748.3 691.0,745.3 693.0,745.1 695.0,747.5 697.0,749.7 699.0,752.7 701.0,745.5 703.0,748.4 705.0,744.4 707.0,751.7 709.0,744.9 711.0,744.2 713.0,739.7 715.0,738.7 717.0,743.9 719.0,744.3 721.0,744.4 723.0,738.6 725.0,735.8 727.0,728.8 729.0,726.8 731.0,727.3 733.0,718.0 735.0,712.7 737.0,719.3 739.0,713.8 741.0,713.0 743.0,712.1 745.0,712.0 747.0,720.2 749.0,715.4 751.0,724.3 753.0,729.1 755.0,734.0 757.0,735.5 759.0,738.4 761.0,731.7 763.0,742.2 765.0,749.1 767.0,759.1 769.0,761.4 771.0,767.2 773.0,767.8 775.0,770.3 777.0,770.8 779.0,771.2 781.0,771.3 783.0,771.7 785.0,771.8 787.0,768.9 789.0,768.5 791.0,768.5 793.0,754.8 795.0,741.5 797.0,737.0 799.0,732.3 801.0,728.7 803.0,726.8 805.0,724.9 807.0,728.3 809.0,735.9 811.0,740.9 813.0,740.9 815.0,736.3 817.0,727.9 819.0,726.5 821.0,721.2 823.0,716.6 825.0,720.3 827.0,717.4 829.0,719.0 831.0,718.6 833.0,721.5 835.0,718.7 837.0,717.7 839.0,728.4 841.0,731.6 843.0,730.3 845.0,733.9 847.0,739.5 849.0,745.8 851.0,749.3 853.0,750.6 855.0,752.9 857.0,755.1 859.0,757.8 861.0,759.5 863.0,762.1 865.0,766.2 867.0,754.8 869.0,746.6 871.0,742.9 873.0,746.4 875.0,747.7 877.0,749.8 879.0,739.5 881.0,738.6 883.0,741.7 885.0,745.2 887.0,742.7 889.0,744.5 891.0,751.1 893.0,741.4 895.0,754.2 897.0,756.0 899.0,759.3 901.0,759.4 903.0,761.6 905.0,764.3 907.0,763.1 909.0,747.5 911.0,739.2 913.0,733.6 915.0,736.4 917.0,732.6 919.0,749.0 921.0,739.8 923.0,738.4 925.0,733.5 927.0,726.3 929.0,719.9 931.0,723.6 933.0,721.1 935.0,723.0 937.0,727.9 939.0,722.0 941.0,726.1 943.0,732.1 945.0,729.8 947.0,730.0 949.0,725.2 951.0,727.1 953.0,739.4 955.0,745.5 957.0,738.8 959.0,744.0 961.0,740.3 963.0,731.2 965.0,727.7 967.0,730.6 969.0,737.9 971.0,733.2 973.0,735.0 975.0,730.2 977.0,733.7 979.0,734.7 981.0,736.6 983.0,739.0 985.0,739.4 987.0,735.2 989.0,728.8 991.0,720.9 993.0,720.5 995.0,718.3 997.0,715.8 999.0,711.8 1001.0,710.5 1003.0,710.3 1005.0,712.0 1007.0,711.0 1009.0,714.3 1011.0,713.7 1013.0,724.5 1015.0,723.1 1017.0,744.6 1019.0,747.6 1021.0,751.4 1023.0,757.0 1025.0,756.9 1027.0,758.7 1029.0,747.0 1031.0,750.5 1033.0,743.4 1035.0,738.5 1037.0,743.9 1039.0,744.9 1041.0,748.4 1043.0,750.3 1045.0,751.4 1047.0,754.5 1049.0,750.8 1051.0,753.1 1053.0,745.1 1055.0,743.7 1057.0,746.8 1059.0,749.9 1061.0,743.2 1063.0,748.6 1065.0,746.2 1067.0,732.0 1069.0,728.5 1071.0,728.2 1073.0,738.6 1075.0,740.2 1077.0,736.0 1079.0,723.9 1081.0,717.6 1083.0,714.5 1085.0,711.7 1087.0,718.0 1089.0,714.6 1091.0,712.3 1093.0,712.1 1095.0,712.0 1097.0,714.7 1099.0,713.2 1101.0,712.3 1103.0,717.5 1105.0,723.8 1107.0,729.6 1109.0,736.9 1111.0,733.5 1113.0,734.5 1115.0,729.0 1117.0,726.4 1119.0,726.4 1121.0,733.6 1123.0,740.4 1125.0,747.6 1127.0,744.9 1129.0,737.4 1131.0,733.4 1133.0,728.8 1135.0,727.3 1137.0,724.3 1139.0,722.1 1141.0,726.4 1143.0,727.8 1145.0,723.8 1147.0,718.0 1149.0,715.3 1151.0,715.1 1153.0,714.3 1155.0,714.2 1157.0,711.9 1159.0,707.6 1161.0,703.3 1163.0,701.1 1165.0,700.0 1167.0,699.7 1169.0,699.3 1171.0,699.3 1173.0,699.1 1175.0,698.9 1177.0,700.8 1179.0,700.5 1181.0,703.1 1183.0,702.7 1185.0,701.9 1187.0,701.5 1189.0,708.8 1191.0,723.9 1193.0,730.4 1195.0,729.8 1197.0,723.4 1199.0,718.8 1201.0,714.9 1203.0,713.7 1205.0,711.5 1207.0,710.1 1209.0,709.9 1211.0,707.9 1213.0,706.1 1215.0,711.1 1217.0,713.2 1219.0,712.7 1221.0,709.2 1223.0,708.9 1225.0,717.8 1227.0,726.3 1229.0,728.6 1231.0,736.3 1233.0,742.8 1235.0,740.3 1237.0,732.0 1239.0,721.0 1241.0,711.1 1243.0,710.8 1245.0,725.7 1247.0,731.2 1249.0,737.0 1251.0,735.3 1253.0,733.3 1255.0,732.0 1257.0,727.7 1259.0,728.1 1261.0,724.6 1263.0,721.8 1265.0,722.3 1267.0,718.8 1269.0,720.1 1271.0,726.1 1273.0,734.9 1275.0,739.8 1277.0,736.2 1279.0,740.1 1281.0,733.9 1283.0,736.0 1285.0,744.0 1287.0,749.0 1289.0,754.9 1291.0,755.5 1293.0,759.9 1295.0,760.5 1297.0,760.1 1299.0,761.3 1301.0,763.0 1303.0,763.6 1305.0,764.6 1307.0,757.7 1309.0,758.3 1311.0,747.5 1313.0,740.6 1315.0,741.8 1317.0,746.3 1319.0,742.4 1321.0,751.0 1323.0,756.4 1325.0,756.3 1327.0,760.9 1329.0,764.0 1331.0,764.9 1333.0,762.6 1335.0,738.0 1337.0,735.9 1339.0,741.0 1341.0,745.6 1343.0,739.1 1345.0,737.7 1347.0,740.2 1349.0,735.1 1351.0,739.8 1353.0,736.7 1355.0,729.4 1357.0,724.1 1359.0,727.5 1361.0,726.9 1363.0,719.4 1365.0,712.9 1367.0,707.1 1369.0,706.5 1371.0,718.0 1373.0,719.1 1375.0,736.4 1377.0,733.0 1379.0,729.5 1381.0,733.3 1383.0,730.6 1385.0,730.5 1387.0,734.0 1389.0,723.3 1391.0,712.5 1393.0,710.6 1395.0,711.1 1397.0,710.6 1399.0,709.2 1401.0,706.7 1403.0,706.7 1405.0,713.1 1407.0,711.0 1409.0,723.4 1411.0,734.2 1413.0,731.6 1415.0,727.5 1417.0,725.9 1419.0,724.2 1421.0,734.9 1423.0,736.5 1425.0,734.0 1427.0,731.9 1429.0,733.4 1431.0,735.1 1433.0,744.2 1435.0,745.6 1437.0,745.4 1439.0,743.9 1441.0,734.8 1443.0,741.8 1445.0,737.3 1447.0,736.0 1449.0,732.5 1451.0,722.9 1453.0,720.1 1455.0,718.2 1457.0,723.4 1459.0,734.0 1461.0,729.8 1463.0,725.8 1465.0,720.6 1467.0,718.1 1469.0,715.2 1471.0,715.2 1473.0,714.2 1475.0,716.0 1477.0,717.9 1479.0,714.2 1481.0,725.7" fill="none" stroke="#3fbfb4" stroke-width="1" /></g><rect x="5" y="328" width="1849" height="2" fill="#ff1010"/><rect x="5" y="390" width="1849" height="2" fill="#0000ff"/><rect x="5" y="420.5" width="1849" height="2" fill="#0000ff"/><text x="1467" y="342" font-size="12.4" fill="#ff1a1a" textLength="70" lengthAdjust="spacingAndGlyphs">SL (-8.3pips)</text><text x="1366" y="404" font-size="12.4" fill="#0000ff" textLength="191" lengthAdjust="spacingAndGlyphs">TP1 &amp; SL-&gt;B/E (8.3pips R/R=1:1.0)</text><text x="1405.5" y="435" font-size="12.4" fill="#0000ff" textLength="139.5" lengthAdjust="spacingAndGlyphs">TP2 (16.6pips R/R=1:2.0)</text><path d="M1476 31 h12 l-6 5z" fill="#7fbfba"/><path d="M1812.6 647 L1824 658 V665.5 L1816 658.5 V674 H1809.4 V658.5 L1801.2 665.5 V658 Z" fill="#33cc33"/><text x="1780" y="686" font-size="12.4" fill="#22bb22" textLength="71" lengthAdjust="spacingAndGlyphs">(5min 14:35)</text><rect x="4.5" y="30.5" width="1850" height="664" fill="none" stroke="#fff" stroke-width="1"/><rect x="4.5" y="696.5" width="1850" height="78" fill="none" stroke="#fff" stroke-width="1"/><line x1="1855" y1="34.5" x2="1858" y2="34.5" stroke="#fff"/><text x="1862" y="38.0" font-size="12.4" fill="#fff" textLength="45" lengthAdjust="spacingAndGlyphs">1.17285</text><line x1="1855" y1="82.5" x2="1858" y2="82.5" stroke="#fff"/><text x="1862" y="87.0" font-size="12.4" fill="#fff" textLength="45" lengthAdjust="spacingAndGlyphs">1.17155</text><line x1="1855" y1="132.5" x2="1858" y2="132.5" stroke="#fff"/><text x="1862" y="136.5" font-size="12.4" fill="#fff" textLength="45" lengthAdjust="spacingAndGlyphs">1.17020</text><line x1="1855" y1="182.5" x2="1858" y2="182.5" stroke="#fff"/><text x="1862" y="186.0" font-size="12.4" fill="#fff" textLength="45" lengthAdjust="spacingAndGlyphs">1.16890</text><line x1="1855" y1="230.5" x2="1858" y2="230.5" stroke="#fff"/><text x="1862" y="235.0" font-size="12.4" fill="#fff" textLength="45" lengthAdjust="spacingAndGlyphs">1.16760</text><line x1="1855" y1="280.5" x2="1858" y2="280.5" stroke="#fff"/><text x="1862" y="284.5" font-size="12.4" fill="#fff" textLength="45" lengthAdjust="spacingAndGlyphs">1.16625</text><line x1="1855" y1="379.5" x2="1858" y2="379.5" stroke="#fff"/><text x="1862" y="383.5" font-size="12.4" fill="#fff" textLength="45" lengthAdjust="spacingAndGlyphs">1.16360</text><line x1="1855" y1="428.5" x2="1858" y2="428.5" stroke="#fff"/><text x="1862" y="433.0" font-size="12.4" fill="#fff" textLength="45" lengthAdjust="spacingAndGlyphs">1.16230</text><line x1="1855" y1="478.5" x2="1858" y2="478.5" stroke="#fff"/><text x="1862" y="482.5" font-size="12.4" fill="#fff" textLength="45" lengthAdjust="spacingAndGlyphs">1.16095</text><line x1="1855" y1="527.5" x2="1858" y2="527.5" stroke="#fff"/><text x="1862" y="531.5" font-size="12.4" fill="#fff" textLength="45" lengthAdjust="spacingAndGlyphs">1.15965</text><line x1="1855" y1="576.5" x2="1858" y2="576.5" stroke="#fff"/><text x="1862" y="581.0" font-size="12.4" fill="#fff" textLength="45" lengthAdjust="spacingAndGlyphs">1.15835</text><line x1="1855" y1="626.5" x2="1858" y2="626.5" stroke="#fff"/><text x="1862" y="630.5" font-size="12.4" fill="#fff" textLength="45" lengthAdjust="spacingAndGlyphs">1.15700</text><line x1="1855" y1="675.5" x2="1858" y2="675.5" stroke="#fff"/><text x="1862" y="679.5" font-size="12.4" fill="#fff" textLength="45" lengthAdjust="spacingAndGlyphs">1.15570</text><line x1="5.5" y1="774" x2="5.5" y2="778" stroke="#fff"/><text x="5" y="790" font-size="12.2" fill="#fff">16 Jul 2025</text><line x1="101.5" y1="774" x2="101.5" y2="778" stroke="#fff"/><text x="101" y="790" font-size="12.2" fill="#fff">16 Jul 05:20</text><line x1="197.5" y1="774" x2="197.5" y2="778" stroke="#fff"/><text x="197" y="790" font-size="12.2" fill="#fff">16 Jul 09:20</text><line x1="293.5" y1="774" x2="293.5" y2="778" stroke="#fff"/><text x="293" y="790" font-size="12.2" fill="#fff">16 Jul 13:20</text><line x1="389.5" y1="774" x2="389.5" y2="778" stroke="#fff"/><text x="389" y="790" font-size="12.2" fill="#fff">16 Jul 17:20</text><line x1="485.5" y1="774" x2="485.5" y2="778" stroke="#fff"/><text x="485" y="790" font-size="12.2" fill="#fff">16 Jul 21:20</text><line x1="581.5" y1="774" x2="581.5" y2="778" stroke="#fff"/><text x="581" y="790" font-size="12.2" fill="#fff">17 Jul 01:20</text><line x1="677.5" y1="774" x2="677.5" y2="778" stroke="#fff"/><text x="677" y="790" font-size="12.2" fill="#fff">17 Jul 05:20</text><line x1="773.5" y1="774" x2="773.5" y2="778" stroke="#fff"/><text x="773" y="790" font-size="12.2" fill="#fff">17 Jul 09:20</text><line x1="869.5" y1="774" x2="869.5" y2="778" stroke="#fff"/><text x="869" y="790" font-size="12.2" fill="#fff">17 Jul 13:20</text><line x1="965.5" y1="774" x2="965.5" y2="778" stroke="#fff"/><text x="965" y="790" font-size="12.2" fill="#fff">17 Jul 17:20</text><line x1="1061.5" y1="774" x2="1061.5" y2="778" stroke="#fff"/><text x="1061" y="790" font-size="12.2" fill="#fff">17 Jul 21:20</text><line x1="1157.5" y1="774" x2="1157.5" y2="778" stroke="#fff"/><text x="1157" y="790" font-size="12.2" fill="#fff">18 Jul 01:20</text><line x1="1253.5" y1="774" x2="1253.5" y2="778" stroke="#fff"/><text x="1253" y="790" font-size="12.2" fill="#fff">18 Jul 05:20</text><line x1="1349.5" y1="774" x2="1349.5" y2="778" stroke="#fff"/><text x="1349" y="790" font-size="12.2" fill="#fff">18 Jul 09:20</text><line x1="1445.5" y1="774" x2="1445.5" y2="778" stroke="#fff"/><text x="1445" y="790" font-size="12.2" fill="#fff">18 Jul 13:20</text><text x="1858" y="710.2" font-size="12.2" fill="#fff">100</text><text x="1858" y="729.0" font-size="12.2" fill="#fff">65</text><text x="1858" y="751.5" font-size="12.2" fill="#fff">35</text><text x="1858" y="770.9" font-size="12.2" fill="#fff">0</text><text x="9" y="712" font-size="12.2" fill="#fff" textLength="84.5" lengthAdjust="spacingAndGlyphs">RSI(8) 45.8992</text><rect x="5" y="34.5" width="400" height="26" fill="#108179"/><path d="M8 38 h9 l-4.5 5.5z" fill="#fff"/><text x="23" y="45" font-size="12.4" fill="#fff" textLength="269" lengthAdjust="spacingAndGlyphs">EURUSD,M5  1.16443 1.16451 1.16412 1.16412</text><text x="9" y="58" font-size="12.4" fill="#fff" textLength="392" lengthAdjust="spacingAndGlyphs">Spread: 2.0  Ticks: 125  Reversal Sell trade open: current profit=-35.60</text><text x="1680" y="46" font-size="12.4" fill="#fff" textLength="151" lengthAdjust="spacingAndGlyphs">B&amp;B TradeManager v1.1_fx</text><g fill="none" stroke="#fff" stroke-width="1.2"><circle cx="1843" cy="42" r="6.5"/><path d="M1839.5 43.5 q3.5 3.5 7 0"/></g><circle cx="1841" cy="40" r="0.9" fill="#fff"/><circle cx="1845" cy="40" r="0.9" fill="#fff"/><rect x="1856" y="323" width="56" height="14" fill="#ff0000"/><text x="1862" y="334.5" font-size="12.4" fill="#11817a" textLength="45" lengthAdjust="spacingAndGlyphs">1.16495</text><svg x="1856" y="345" width="56" height="8"><rect width="56" height="8" fill="#58a8a4"/><text x="6" y="11.5" font-size="12.4" fill="#11817a" textLength="45" lengthAdjust="spacingAndGlyphs">1.16432</text></svg><rect x="1856" y="353" width="56" height="14" fill="#ffffff"/><text x="1862" y="364.5" font-size="12.4" fill="#11817a" textLength="45" lengthAdjust="spacingAndGlyphs">1.16412</text><rect x="1856" y="385" width="56" height="14" fill="#0000ff"/><text x="1862" y="396.5" font-size="12.4" fill="#11817a" textLength="45" lengthAdjust="spacingAndGlyphs">1.16329</text><rect x="1856" y="415.5" width="56" height="14" fill="#0000ff"/><text x="1862" y="427" font-size="12.4" fill="#11817a" textLength="45" lengthAdjust="spacingAndGlyphs">1.16246</text><rect x="0" y="798" width="1920" height="32" fill="#f0f0f0" /><rect x="0" y="799.8" width="147" height="1.5" fill="#1a1a1a" /><rect x="254" y="799.8" width="1666" height="1.5" fill="#1a1a1a" /><rect x="1.5" y="801" width="1.5" height="22" fill="#9a9a9a" /><rect x="147" y="798" width="107" height="25.5" fill="#ffffff" /><path d="M147.5 800 V823.5 H254.8 V800" fill="none" stroke="#111" stroke-width="1.3"/><text x="20" y="818" font-size="14" fill="#8c8c8c" font-weight="normal" text-anchor="start" textLength="113" lengthAdjust="spacingAndGlyphs" >EURUSD,Monthly</text><text x="161.5" y="818" font-size="14" fill="#000" font-weight="normal" text-anchor="start" textLength="79" lengthAdjust="spacingAndGlyphs" >EURUSD,M5</text><path d="M1884 807 l-5 4 l5 4z" fill="#9a9a9a"/><path d="M1904 807 l5 4 l-5 4z" fill="#9a9a9a"/><rect x="0" y="826" width="1920" height="136" fill="#f0f0f0" /><rect x="20" y="830.5" width="1893" height="100" fill="#ffffff" /><path d="M20.5 830.5 H1913 V930" fill="none" stroke="#a0a0a0" stroke-width="1"/><line x1="20.5" y1="830.5" x2="20.5" y2="930" stroke="#a0a0a0" stroke-width="1" /><path d="M6.5 832.5 l6.5 6.5 M13 832.5 l-6.5 6.5" stroke="#111" stroke-width="1.5"/><rect x="3" y="848" width="16" height="109" fill="#c8d9ea" /><text transform="translate(17,955) rotate(-90)" font-size="14" fill="#222" textLength="54" lengthAdjust="spacingAndGlyphs">Terminal</text><line x1="21" y1="857.5" x2="1913" y2="857.5" stroke="#d8d8d8" stroke-width="1" /><line x1="21" y1="882" x2="1913" y2="882" stroke="#e6e6e6" stroke-width="1" /><line x1="172.5" y1="831" x2="172.5" y2="882" stroke="#dadada" stroke-width="1" /><line x1="383.5" y1="831" x2="383.5" y2="882" stroke="#dadada" stroke-width="1" /><line x1="488.5" y1="831" x2="488.5" y2="882" stroke="#dadada" stroke-width="1" /><line x1="570.5" y1="831" x2="570.5" y2="882" stroke="#dadada" stroke-width="1" /><line x1="675.5" y1="831" x2="675.5" y2="882" stroke="#dadada" stroke-width="1" /><line x1="792.5" y1="831" x2="792.5" y2="882" stroke="#dadada" stroke-width="1" /><line x1="909.5" y1="831" x2="909.5" y2="882" stroke="#dadada" stroke-width="1" /><line x1="1026.5" y1="831" x2="1026.5" y2="882" stroke="#dadada" stroke-width="1" /><line x1="1143.5" y1="831" x2="1143.5" y2="882" stroke="#dadada" stroke-width="1" /><line x1="1260.5" y1="831" x2="1260.5" y2="882" stroke="#dadada" stroke-width="1" /><line x1="1377.5" y1="831" x2="1377.5" y2="882" stroke="#dadada" stroke-width="1" /><line x1="1553.5" y1="831" x2="1553.5" y2="882" stroke="#dadada" stroke-width="1" /><text x="27" y="850" font-size="14" fill="#111" font-weight="normal" text-anchor="start" >Order</text><text x="378" y="850" font-size="14" fill="#111" font-weight="normal" text-anchor="end" >Time</text><text x="482" y="850" font-size="14" fill="#111" font-weight="normal" text-anchor="end" >Type</text><text x="564" y="850" font-size="14" fill="#111" font-weight="normal" text-anchor="end" >Size</text><text x="669" y="850" font-size="14" fill="#111" font-weight="normal" text-anchor="end" >Symbol</text><text x="787" y="850" font-size="14" fill="#111" font-weight="normal" text-anchor="end" >Price</text><text x="904" y="850" font-size="14" fill="#111" font-weight="normal" text-anchor="end" >S / L</text><text x="1020" y="850" font-size="14" fill="#111" font-weight="normal" text-anchor="end" >T / P</text><text x="1138" y="850" font-size="14" fill="#111" font-weight="normal" text-anchor="end" >Price</text><text x="1255" y="850" font-size="14" fill="#111" font-weight="normal" text-anchor="end" >Commission</text><text x="1372" y="850" font-size="14" fill="#111" font-weight="normal" text-anchor="end" >Swap</text><text x="1548" y="850" font-size="14" fill="#111" font-weight="normal" text-anchor="end" >Profit</text><text x="1907" y="850" font-size="14" fill="#111" font-weight="normal" text-anchor="end" >Comment</text><path d="M78 848 l2.5 -5" stroke="#888" stroke-width="1"/><text x="48" y="875" font-size="14" fill="#111" font-weight="normal" text-anchor="start" >19034783</text><text x="379" y="875" font-size="14" fill="#111" font-weight="normal" text-anchor="end" >2025.07.18 14:54:08</text><text x="482" y="875" font-size="14" fill="#111" font-weight="normal" text-anchor="end" >sell</text><text x="565" y="875" font-size="14" fill="#111" font-weight="normal" text-anchor="end" >1.78</text><text x="670" y="875" font-size="14" fill="#111" font-weight="normal" text-anchor="end" >eurusd</text><text x="787" y="875" font-size="14" fill="#111" font-weight="normal" text-anchor="end" >1.16412</text><text x="904" y="875" font-size="14" fill="#111" font-weight="normal" text-anchor="end" >1.16565</text><text x="1022" y="875" font-size="14" fill="#111" font-weight="normal" text-anchor="end" >1.16176</text><text x="1139" y="875" font-size="14" fill="#111" font-weight="normal" text-anchor="end" >1.16432</text><text x="1256" y="875" font-size="14" fill="#111" font-weight="normal" text-anchor="end" >0.00</text><text x="1372" y="875" font-size="14" fill="#111" font-weight="normal" text-anchor="end" >0.00</text><text x="1524" y="875" font-size="14" fill="#111" font-weight="normal" text-anchor="end" >-20</text><text x="1908" y="875" font-size="14" fill="#111" font-weight="normal" text-anchor="end" >Magic#: 30752</text><g transform="translate(25,861)"><path d="M1.5 0.5 h9 l3.5 3.5 v12 h-12.5z" fill="#fff" stroke="#777" stroke-width="1"/><circle cx="12" cy="14" r="4" fill="#e8401c" stroke="#a02a10" stroke-width="0.8"/></g><path d="M1535 864 l11 11 M1546 864 l-11 11" stroke="#777" stroke-width="1.6"/><rect x="21" y="882.5" width="1892" height="24" fill="#c8c8c8" /><g transform="translate(24,886)"><rect x="0.5" y="0.5" width="14" height="15" fill="#f4f4f4" stroke="#888"/><path d="M5 3 h5 v5 h3 l-5.5 5 l-5.5 -5 h3z" fill="#e8401c"/></g><text x="48" y="900" font-size="15" fill="#000" font-weight="bold" text-anchor="start" textLength="766" lengthAdjust="spacingAndGlyphs" >Balance: 29 503.13 USD  Equity: 29 467.53  Margin: 207.21  Free margin: 29 260.32  Margin level: 14220.86%</text><text x="1524" y="900" font-size="15" fill="#000" font-weight="bold" text-anchor="end" >-35.60</text><rect x="20" y="930" width="1893" height="1.5" fill="#1a1a1a" /><rect x="23" y="930" width="63" height="25" fill="#ffffff" /><path d="M23.5 931 V954.5 H85.5 V931" fill="none" stroke="#111" stroke-width="1.3"/><text x="36" y="948" font-size="14" fill="#000" font-weight="normal" text-anchor="start" textLength="36.5" lengthAdjust="spacingAndGlyphs" >Trade</text><text x="100" y="948" font-size="14" fill="#8c8c8c" font-weight="normal" text-anchor="start" textLength="58" lengthAdjust="spacingAndGlyphs" >Exposure</text><text x="184" y="948" font-size="14" fill="#8c8c8c" font-weight="normal" text-anchor="start" textLength="105" lengthAdjust="spacingAndGlyphs" >Account History</text><text x="314" y="948" font-size="14" fill="#8c8c8c" font-weight="normal" text-anchor="start" textLength="36" lengthAdjust="spacingAndGlyphs" >News</text><text x="375" y="948" font-size="14" fill="#8c8c8c" font-weight="normal" text-anchor="start" textLength="38" lengthAdjust="spacingAndGlyphs" >Alerts</text><text x="438" y="948" font-size="14" fill="#8c8c8c" font-weight="normal" text-anchor="start" textLength="54" lengthAdjust="spacingAndGlyphs" >Mailbox</text><text x="527" y="948" font-size="14" fill="#8c8c8c" font-weight="normal" text-anchor="start" textLength="46" lengthAdjust="spacingAndGlyphs" >Market</text><text x="622" y="948" font-size="14" fill="#8c8c8c" font-weight="normal" text-anchor="start" textLength="49" lengthAdjust="spacingAndGlyphs" >Articles</text><text x="696" y="948" font-size="14" fill="#8c8c8c" font-weight="normal" text-anchor="start" textLength="70" lengthAdjust="spacingAndGlyphs" >Code Base</text><text x="791" y="948" font-size="14" fill="#8c8c8c" font-weight="normal" text-anchor="start" textLength="48" lengthAdjust="spacingAndGlyphs" >Experts</text><text x="863" y="948" font-size="14" fill="#8c8c8c" font-weight="normal" text-anchor="start" textLength="47" lengthAdjust="spacingAndGlyphs" >Journal</text><line x1="172.5" y1="934" x2="172.5" y2="951" stroke="#555" stroke-width="1.2" /><line x1="302.5" y1="934" x2="302.5" y2="951" stroke="#555" stroke-width="1.2" /><line x1="362.5" y1="934" x2="362.5" y2="951" stroke="#555" stroke-width="1.2" /><line x1="426.5" y1="934" x2="426.5" y2="951" stroke="#555" stroke-width="1.2" /><line x1="515.5" y1="934" x2="515.5" y2="951" stroke="#555" stroke-width="1.2" /><line x1="610.5" y1="934" x2="610.5" y2="951" stroke="#555" stroke-width="1.2" /><line x1="683.5" y1="934" x2="683.5" y2="951" stroke="#555" stroke-width="1.2" /><line x1="778.5" y1="934" x2="778.5" y2="951" stroke="#555" stroke-width="1.2" /><line x1="852.5" y1="934" x2="852.5" y2="951" stroke="#555" stroke-width="1.2" /><line x1="923.5" y1="934" x2="923.5" y2="951" stroke="#555" stroke-width="1.2" /><text x="494" y="950" font-size="12" fill="#e0202a" font-weight="normal" text-anchor="start" >5</text><text x="577" y="950" font-size="12" fill="#e0202a" font-weight="normal" text-anchor="start" >122</text><rect x="0" y="961.5" width="1920" height="1.5" fill="#b4b4b4" /><rect x="0" y="963" width="1920" height="27" fill="#f0f0f0" /><text x="2.7" y="985" font-size="14" fill="#111" font-weight="normal" text-anchor="start" textLength="115" lengthAdjust="spacingAndGlyphs" >For Help, press F1</text><line x1="1047.5" y1="967" x2="1047.5" y2="990" stroke="#a8a8a8" stroke-width="1" /><line x1="1196.5" y1="967" x2="1196.5" y2="990" stroke="#a8a8a8" stroke-width="1" /><line x1="1327.5" y1="967" x2="1327.5" y2="990" stroke="#a8a8a8" stroke-width="1" /><line x1="1416.5" y1="967" x2="1416.5" y2="990" stroke="#a8a8a8" stroke-width="1" /><line x1="1505.5" y1="967" x2="1505.5" y2="990" stroke="#a8a8a8" stroke-width="1" /><line x1="1590.5" y1="967" x2="1590.5" y2="990" stroke="#a8a8a8" stroke-width="1" /><line x1="1677.5" y1="967" x2="1677.5" y2="990" stroke="#a8a8a8" stroke-width="1" /><line x1="1761.5" y1="967" x2="1761.5" y2="990" stroke="#a8a8a8" stroke-width="1" /><text x="1053" y="985" font-size="14" fill="#111" font-weight="normal" text-anchor="start" >Default</text><text x="1803.5" y="985" font-size="14" fill="#111" font-weight="normal" text-anchor="start" textLength="56.5" lengthAdjust="spacingAndGlyphs" >378/1 kb</text><rect x="1767" y="970" width="3" height="11.2" fill="#4f7a12" /><rect x="1767" y="982.0" width="3" height="4.0" fill="#0e3a5a" /><rect x="1771" y="970" width="3" height="10.050000000000022" fill="#4f7a12" /><rect x="1771" y="980.85" width="3" height="5.149999999999977" fill="#0e3a5a" /><rect x="1775" y="970" width="3" height="8.900000000000045" fill="#4f7a12" /><rect x="1775" y="979.7" width="3" height="6.2999999999999545" fill="#0e3a5a" /><rect x="1779" y="970" width="3" height="7.749999999999955" fill="#4f7a12" /><rect x="1779" y="978.55" width="3" height="7.4500000000000455" fill="#0e3a5a" /><rect x="1783" y="970" width="3" height="6.599999999999977" fill="#4f7a12" /><rect x="1783" y="977.4" width="3" height="8.600000000000023" fill="#0e3a5a" /><rect x="1787" y="970" width="3" height="5.45" fill="#4f7a12" /><rect x="1787" y="976.25" width="3" height="9.75" fill="#0e3a5a" /><rect x="1791" y="970" width="3" height="4.300000000000023" fill="#4f7a12" /><rect x="1791" y="975.1" width="3" height="10.899999999999977" fill="#0e3a5a" /><rect x="1795" y="970" width="3" height="3.1500000000000457" fill="#4f7a12" /><rect x="1795" y="973.95" width="3" height="12.049999999999955" fill="#0e3a5a" /><defs><filter id="sh" x="-20%" y="-30%" width="140%" height="160%"><feGaussianBlur stdDeviation="21"/></filter></defs><clipPath id="shc"><rect x="0" y="30" width="1920" height="770"/></clipPath><g clip-path="url(#shc)"><rect x="544" y="42" width="657" height="268" rx="10" fill="#000" opacity="0.62" filter="url(#sh)"/></g><rect x="542" y="33" width="661" height="265" rx="8" fill="#f0f0f0" stroke="#c8c8c8" stroke-width="0.8"/><path d="M542 69.5 V41 a8 8 0 0 1 8 -8 H1195 a8 8 0 0 1 8 8 V69.5z" fill="#f3f3f3"/><defs><linearGradient id="bg" x1="0" y1="0" x2="1" y2="0.3"><stop offset="0" stop-color="#f0d040"/><stop offset="0.35" stop-color="#fff3a0"/><stop offset="0.6" stop-color="#f2cf30"/><stop offset="1" stop-color="#d8aa10"/></linearGradient></defs><g transform="translate(553,41.5) scale(0.34)"><path d="M13 8 Q13.5 4 17 3.5 L20.5 3 Q21 0 24 0 Q27 0 27.5 3 L31 3.5 Q34.5 4 35 8 L39 20 Q41 30 43 32 Q48 35 48 37 Q47.5 41 44 41 H4 Q0.5 41 0 37 Q0 35 5 32 Q7 30 9 20 Z" fill="url(#bg)" stroke="#a07a08" stroke-width="1.6"/><path d="M5 31.5 Q24 26 43 31.5" fill="none" stroke="#b08a10" stroke-width="1.5"/><path d="M16 24 Q17 12 24 8 Q19 14 19 22z" fill="#ffffe8" opacity="0.85"/><circle cx="24" cy="44" r="3.6" fill="#e8b818" stroke="#a07a08" stroke-width="1.2"/></g><text x="578" y="57" font-size="15" fill="#000">Alert</text><text x="1112" y="57" font-size="15" fill="#000">?</text><path d="M1167 45 l12 12 M1179 45 l-12 12" stroke="#111" stroke-width="1.3"/><g transform="translate(558,85) scale(1.0)"><path d="M13 8 Q13.5 4 17 3.5 L20.5 3 Q21 0 24 0 Q27 0 27.5 3 L31 3.5 Q34.5 4 35 8 L39 20 Q41 30 43 32 Q48 35 48 37 Q47.5 41 44 41 H4 Q0.5 41 0 37 Q0 35 5 32 Q7 30 9 20 Z" fill="url(#bg)" stroke="#a07a08" stroke-width="1.6"/><path d="M5 31.5 Q24 26 43 31.5" fill="none" stroke="#b08a10" stroke-width="1.5"/><path d="M16 24 Q17 12 24 8 Q19 14 19 22z" fill="#ffffe8" opacity="0.85"/><circle cx="24" cy="44" r="3.6" fill="#e8b818" stroke="#a07a08" stroke-width="1.2"/></g><text x="624" y="103" font-size="12.85" fill="#000" textLength="328" lengthAdjust="spacingAndGlyphs">[EURUSD] [06:54] Sell trade 1.78 lots opened @ 1.16412</text><line x1="1173.5" y1="90" x2="1173.5" y2="150" stroke="#ffffff"/><path d="M1178.5 104 l4.5 -6 l4.5 6z" fill="#a0a0a0"/><path d="M1178.5 131 l4.5 6 l4.5 -6z" fill="#a0a0a0"/><rect x="551.5" y="155.5" width="642" height="95.5" fill="#fff" stroke="#8a8f96" stroke-width="1"/><rect x="553" y="157" width="639" height="24.5" fill="#ebebeb"/><line x1="553" y1="181.5" x2="1192" y2="181.5" stroke="#d0d0d0"/><line x1="553" y1="206.5" x2="1192" y2="206.5" stroke="#d0d0d0"/><line x1="710.5" y1="157" x2="710.5" y2="206" stroke="#d8d8d8"/><g transform="translate(557.5,161) scale(0.33)"><path d="M13 8 Q13.5 4 17 3.5 L20.5 3 Q21 0 24 0 Q27 0 27.5 3 L31 3.5 Q34.5 4 35 8 L39 20 Q41 30 43 32 Q48 35 48 37 Q47.5 41 44 41 H4 Q0.5 41 0 37 Q0 35 5 32 Q7 30 9 20 Z" fill="url(#bg)" stroke="#a07a08" stroke-width="1.6"/><path d="M5 31.5 Q24 26 43 31.5" fill="none" stroke="#b08a10" stroke-width="1.5"/><path d="M16 24 Q17 12 24 8 Q19 14 19 22z" fill="#ffffe8" opacity="0.85"/><circle cx="24" cy="44" r="3.6" fill="#e8b818" stroke="#a07a08" stroke-width="1.2"/></g><g transform="translate(557.5,186) scale(0.33)"><path d="M13 8 Q13.5 4 17 3.5 L20.5 3 Q21 0 24 0 Q27 0 27.5 3 L31 3.5 Q34.5 4 35 8 L39 20 Q41 30 43 32 Q48 35 48 37 Q47.5 41 44 41 H4 Q0.5 41 0 37 Q0 35 5 32 Q7 30 9 20 Z" fill="url(#bg)" stroke="#a07a08" stroke-width="1.6"/><path d="M5 31.5 Q24 26 43 31.5" fill="none" stroke="#b08a10" stroke-width="1.5"/><path d="M16 24 Q17 12 24 8 Q19 14 19 22z" fill="#ffffe8" opacity="0.85"/><circle cx="24" cy="44" r="3.6" fill="#e8b818" stroke="#a07a08" stroke-width="1.2"/></g><text x="580.4" y="174" font-size="13" fill="#000" textLength="51" lengthAdjust="spacingAndGlyphs">06:54:09</text><text x="580.4" y="199" font-size="13" fill="#000" textLength="51" lengthAdjust="spacingAndGlyphs">06:54:09</text><text x="717" y="174" font-size="12.85" fill="#000" textLength="328" lengthAdjust="spacingAndGlyphs">[EURUSD] [06:54] Sell trade 1.78 lots opened @ 1.16412</text><text x="717" y="199" font-size="12.85" fill="#000">[EURUSD] [06:54] Opening Reversal Sell trade</text><rect x="829.5" y="262.5" width="85" height="25" rx="4" fill="#fdfdfd" stroke="#0067c0" stroke-width="1.2"/><text x="872" y="280" font-size="13" fill="#000" text-anchor="middle">OK</text></svg></body></html>
